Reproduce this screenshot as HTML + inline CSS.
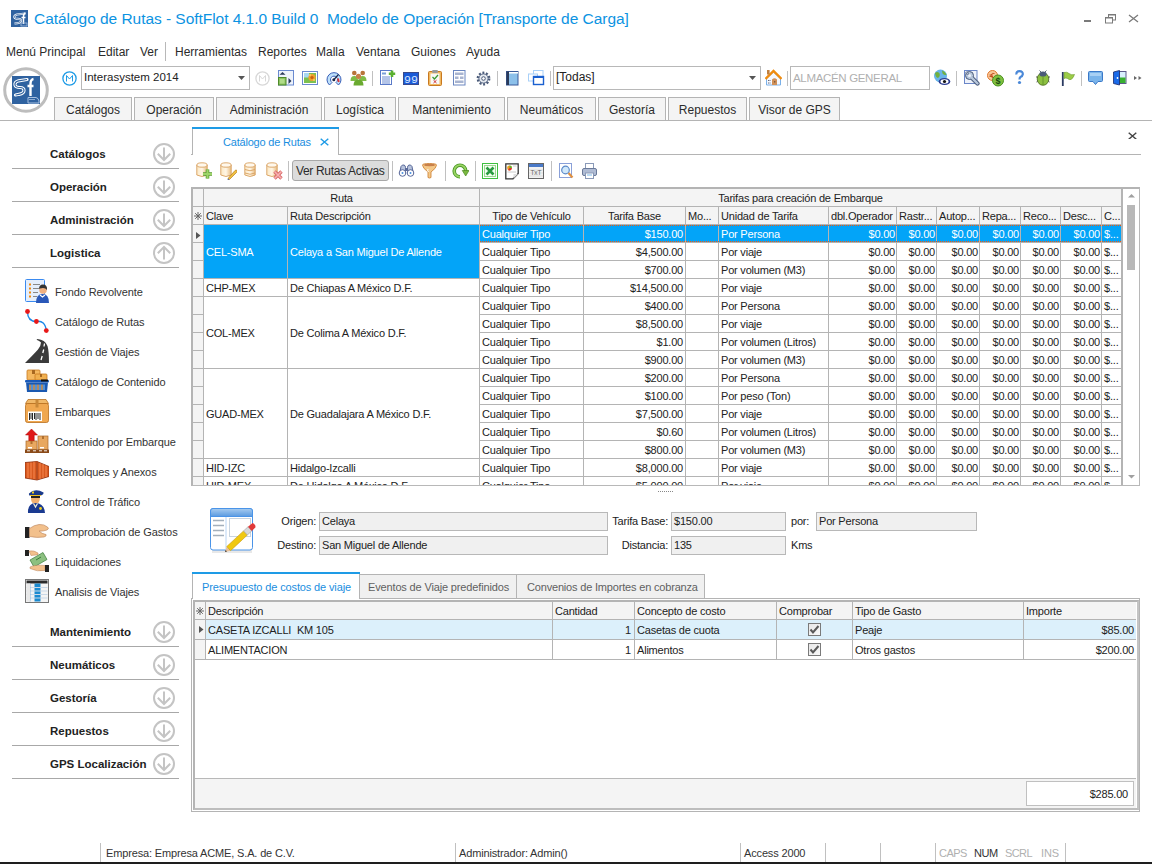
<!DOCTYPE html><html><head><meta charset="utf-8"><style>
html,body{margin:0;padding:0;background:#fff;width:1152px;height:864px;overflow:hidden;position:relative;font-family:"Liberation Sans",sans-serif;}
.t{position:absolute;white-space:pre;}
.r{position:absolute;box-sizing:border-box;}
</style></head><body>
<svg class="r" style="left:11px;top:10px" width="17" height="17" viewBox="0 0 17 17"><rect x="0" y="0" width="17" height="17" fill="#2f62a0"/><path d="M14.5 3.5 L6 4.5 Q3 5.2 3.3 7.2 Q3.7 8.8 7 8.8 Q10 8.8 10 10.8 Q10 12.8 6.5 13.2 L3.5 13.5" stroke="#fff" stroke-width="2" fill="none"/><path d="M14.5 3.5 L6 4.5 Q3 5.2 3.3 7.2 Q3.7 8.8 7 8.8 Q10 8.8 10 10.8 Q10 12.8 6.5 13.2 L3.5 13.5" stroke="#2f62a0" stroke-width="0.7" fill="none"/><path d="M12.5 14 V6.5 Q12.5 3.5 14.5 3 M10.5 7.5 H14.5" stroke="#fff" stroke-width="1.5" fill="none"/><rect x="10" y="13" width="6" height="3" fill="none" stroke="#a8c0e0" stroke-width="0.8"/></svg>
<div class="t" style="left:34px;top:7.63px;font-size:15.5px;line-height:22px;color:#0c93e2;letter-spacing:-0.04px;">Catálogo de Rutas - SoftFlot 4.1.0 Build 0  Modelo de Operación [Transporte de Carga]</div>
<div class="r" style="left:1084px;top:20px;width:7px;height:2px;background:#7a7a7a"></div>
<svg class="r" style="left:1104px;top:13px" width="13" height="11" viewBox="0 0 13 11"><rect x="4.5" y="1.5" width="7" height="5.5" fill="none" stroke="#7a7a7a"/><rect x="4" y="1" width="8" height="1.5" fill="#7a7a7a"/><rect x="1.5" y="4.5" width="7" height="5.5" fill="#fff" stroke="#7a7a7a"/><rect x="1" y="4" width="8" height="1.5" fill="#7a7a7a"/></svg>
<svg class="r" style="left:1128px;top:14px" width="11" height="9" viewBox="0 0 11 9"><path d="M1 1 L10 8 M10 1 L1 8" stroke="#7a7a7a" stroke-width="1.3"/></svg>
<div class="t" style="left:6px;top:44.34px;font-size:12px;line-height:17px;color:#2b2b2b;">Menú Principal</div>
<div class="t" style="left:98px;top:44.34px;font-size:12px;line-height:17px;color:#2b2b2b;">Editar</div>
<div class="t" style="left:140px;top:44.34px;font-size:12px;line-height:17px;color:#2b2b2b;">Ver</div>
<div class="t" style="left:175px;top:44.34px;font-size:12px;line-height:17px;color:#2b2b2b;">Herramientas</div>
<div class="t" style="left:258px;top:44.34px;font-size:12px;line-height:17px;color:#2b2b2b;">Reportes</div>
<div class="t" style="left:316px;top:44.34px;font-size:12px;line-height:17px;color:#2b2b2b;">Malla</div>
<div class="t" style="left:356px;top:44.34px;font-size:12px;line-height:17px;color:#2b2b2b;">Ventana</div>
<div class="t" style="left:411px;top:44.34px;font-size:12px;line-height:17px;color:#2b2b2b;">Guiones</div>
<div class="t" style="left:466px;top:44.34px;font-size:12px;line-height:17px;color:#2b2b2b;">Ayuda</div>
<div class="r" style="left:165px;top:42px;width:1px;height:19px;background:#b8b8b8"></div>
<svg class="r" style="left:2px;top:66px" width="48" height="48" viewBox="0 0 48 48"><circle cx="24" cy="24" r="21.3" fill="#fff" stroke="#bdbdbd" stroke-width="3"/><rect x="10" y="10" width="28" height="28" fill="#2f62a0"/><path d="M25 13.5 L16.5 14.8 Q12.5 15.8 13 19 Q13.5 21.5 18 21.5 Q22 21.5 22 24.5 Q22 27.5 17 28.3 L13.5 29" stroke="#fff" stroke-width="3.2" fill="none" stroke-linecap="round"/><path d="M25 13.5 L16.5 14.8 Q12.5 15.8 13 19 Q13.5 21.5 18 21.5 Q22 21.5 22 24.5 Q22 27.5 17 28.3 L13.5 29" stroke="#2f62a0" stroke-width="1.2" fill="none"/><path d="M28.5 30 V18 Q28.5 13.5 31.5 13 M25.5 20 H31.5" stroke="#fff" stroke-width="2.4" fill="none"/><path d="M26 31.5 H34 Q36.5 32 37 35 V37 H26Z" fill="none" stroke="#a8c0e0" stroke-width="1"/><path d="M27 33.5 H33" stroke="#a8c0e0" stroke-width="0.8"/></svg>
<svg class="r" style="left:62px;top:71px" width="15" height="15" viewBox="0 0 15 15"><circle cx="7.5" cy="7.5" r="6.6" fill="#fff" stroke="#1e9be6" stroke-width="1.3"/><path d="M4.5 10.5 V4.5 L7.5 8 L10.5 4.5 V10.5" stroke="#1e9be6" stroke-width="1" fill="none"/></svg>
<div class="r" style="left:81px;top:66px;width:169px;height:24px;border:1px solid #b8b8b8;background:#fff"></div>
<div class="t" style="left:84px;top:69.02px;font-size:11.5px;line-height:16px;color:#222;">Interasystem 2014</div>
<svg class="r" style="left:238px;top:76px" width="7" height="4" viewBox="0 0 7 4"><path d="M0 0 H7 L3.5 4Z" fill="#555"/></svg>
<svg class="r" style="left:255px;top:71px" width="15" height="15" viewBox="0 0 15 15"><circle cx="7.5" cy="7.5" r="6.6" fill="#fff" stroke="#d8d8d8" stroke-width="1.3"/><path d="M4.5 10.5 V4.5 L7.5 8 L10.5 4.5 V10.5" stroke="#d8d8d8" stroke-width="1" fill="none"/></svg>
<svg class="r" style="left:278px;top:70px" width="16" height="16" viewBox="0 0 16 16"><rect x="0.5" y="0.5" width="15" height="14.5" fill="#eef3fb" stroke="#6a8ad0"/><rect x="0.5" y="7.5" width="7.5" height="7.5" fill="#8cc462" stroke="#4f8a2a"/><rect x="2" y="9" width="4.5" height="4.5" fill="#b0dc88"/><path d="M4.5 2 L7.5 4.8 H1.5Z" fill="#2a3a5a"/><path d="M10.5 8 L13.5 11 L10.5 14Z" fill="#2a3a5a"/></svg>
<svg class="r" style="left:302px;top:71px" width="16" height="14" viewBox="0 0 16 14"><rect x="0.5" y="0.5" width="15" height="13" fill="#fff" stroke="#6a8ad0"/><rect x="2" y="2" width="12" height="10" fill="#7cc050"/><rect x="2" y="2" width="5" height="4.5" fill="#a8d8f0"/><circle cx="10" cy="6.5" r="3.6" fill="#f0a030"/><circle cx="10" cy="6.5" r="1.6" fill="#c86010"/><circle cx="8" cy="4" r="1" fill="#f8d060"/><circle cx="12" cy="9" r="1" fill="#f8d060"/></svg>
<svg class="r" style="left:326px;top:71px" width="16" height="15" viewBox="0 0 16 15"><path d="M3.5 14 A7 7 0 1 1 12.5 14 L10 11.5 A3.5 3.5 0 1 0 6 11.5Z" fill="#bfe0fa" stroke="#3a60b8" stroke-width="1"/><path d="M8 8.5 L12.5 3.5" stroke="#1a2a4a" stroke-width="1.2"/><circle cx="7.8" cy="8.8" r="1.5" fill="#1a2a4a"/><path d="M12 7.5 L12.8 11" stroke="#e03030" stroke-width="1.8"/></svg>
<svg class="r" style="left:350px;top:69px" width="17" height="17" viewBox="0 0 17 17"><circle cx="4.3" cy="4" r="2.3" fill="#b8743a"/><circle cx="12.7" cy="4" r="2.3" fill="#b8743a"/><path d="M0.5 12 Q0.5 7 4.3 7 Q8 7 8 12Z" fill="#80bc48"/><path d="M9 12 Q9 7 12.7 7 Q16.5 7 16.5 12Z" fill="#80bc48"/><circle cx="8.5" cy="7.3" r="2.6" fill="#c88048"/><path d="M3.5 16.5 Q3.5 10.5 8.5 10.5 Q13.5 10.5 13.5 16.5Z" fill="#6aaa30"/></svg>
<div class="r" style="left:372px;top:71px;width:1px;height:15px;background:#c0c0c0"></div>
<svg class="r" style="left:379px;top:70px" width="17" height="16" viewBox="0 0 17 16"><rect x="1.5" y="0.5" width="11" height="14" fill="#fff" stroke="#5a7ac8"/><rect x="3" y="2.5" width="4" height="2" fill="#7aa0d8"/><path d="M3 7 H11 M3 9 H11 M3 11 H11 M3 13 H11" stroke="#6a8ad0" stroke-width="1"/><path d="M13 0.5 V7 M9.8 3.8 H16.2" stroke="#5ab030" stroke-width="2.6"/></svg>
<svg class="r" style="left:403px;top:72px" width="16" height="13" viewBox="0 0 16 13"><rect x="0.5" y="0.5" width="15" height="12" fill="#1a5ad8" stroke="#3a4a8a"/><text x="8" y="11" font-size="11.5" text-anchor="middle" fill="#dbe8ff" font-family="Liberation Mono">99</text></svg>
<svg class="r" style="left:428px;top:70px" width="14" height="16" viewBox="0 0 14 16"><rect x="0.5" y="1.5" width="13" height="14" rx="1" fill="#f0b860" stroke="#c87820"/><rect x="2.5" y="3.5" width="9" height="10.5" fill="#f8f8f8"/><rect x="4" y="0" width="6" height="3" rx="1.2" fill="#9a9a9a"/><path d="M4.5 7 L6.5 9 L10 5" stroke="#3a9a30" stroke-width="1.2" fill="none"/><path d="M5.5 10.2 L8.5 13 M8.5 10.2 L5.5 13" stroke="#d03030" stroke-width="1"/></svg>
<svg class="r" style="left:453px;top:70px" width="13" height="16" viewBox="0 0 13 16"><rect x="0.5" y="0.5" width="11.5" height="14.5" fill="#fff" stroke="#6a86c0"/><rect x="2" y="2.5" width="8.5" height="2.5" fill="#a8b4d0"/><rect x="2" y="6.5" width="3.5" height="2.5" fill="#a8b4d0"/><rect x="7" y="6.5" width="3.5" height="2.5" fill="#a8b4d0"/><rect x="2" y="10.5" width="8.5" height="2.5" fill="#a8b4d0"/></svg>
<svg class="r" style="left:476px;top:71px" width="15" height="15" viewBox="0 0 15 15"><circle cx="7.5" cy="7.5" r="5.6" fill="none" stroke="#4a5a78" stroke-width="2.6" stroke-dasharray="1.9 1.62"/><circle cx="7.5" cy="7.5" r="4.6" fill="#e4e8ee" stroke="#5a6a88" stroke-width="1"/><circle cx="7.5" cy="7.5" r="1.8" fill="#fff" stroke="#4a5a78" stroke-width="1"/></svg>
<div class="r" style="left:497px;top:71px;width:1px;height:15px;background:#c0c0c0"></div>
<svg class="r" style="left:506px;top:71px" width="13" height="15" viewBox="0 0 13 15"><rect x="0.5" y="0.5" width="11.5" height="13.5" fill="#8cc0ea" stroke="#3a5a9a"/><rect x="0.5" y="0.5" width="2.5" height="13.5" fill="#2a3a5a"/><rect x="3" y="1" width="9" height="1.5" fill="#fff"/></svg>
<svg class="r" style="left:528px;top:70px" width="17" height="16" viewBox="0 0 17 16"><rect x="5.5" y="0.5" width="9.5" height="7" fill="#fff" stroke="#a8d0f8"/><rect x="0.5" y="4" width="9" height="7" fill="#fff" stroke="#a8d0f8"/><rect x="5.5" y="6.5" width="10" height="8" fill="#fff" stroke="#1a60d0" stroke-width="1.4"/><rect x="5" y="6" width="11" height="2" fill="#1a60d0"/></svg>
<div class="r" style="left:550px;top:71px;width:1px;height:15px;background:#c0c0c0"></div>
<div class="r" style="left:553px;top:66px;width:208px;height:24px;border:1px solid #b8b8b8;background:#fff"></div>
<div class="t" style="left:556px;top:69.34px;font-size:12px;line-height:17px;color:#222;">[Todas]</div>
<svg class="r" style="left:749px;top:76px" width="7" height="4" viewBox="0 0 7 4"><path d="M0 0 H7 L3.5 4Z" fill="#555"/></svg>
<svg class="r" style="left:765px;top:69px" width="17" height="17" viewBox="0 0 17 17"><path d="M1.5 9.5 V16 H15.5 V9.5 L8.5 3Z" fill="#f4f8ff" stroke="#7ab0e8"/><path d="M0.5 10 L8.5 2 L16.5 10" stroke="#f08c10" stroke-width="2.4" fill="none"/><rect x="2" y="1" width="2.6" height="4.5" fill="#c08040"/><path d="M7 16 V10.5 Q9.5 8 12 10.5 V16Z" fill="#d09058"/><circle cx="9.8" cy="12.8" r="0.6" fill="#222"/><path d="M3.5 11 V12 M5 11 V12 M3.5 13.5 V14.5 M5 13.5 V14.5" stroke="#445" stroke-width="0.8"/></svg>
<div class="r" style="left:787px;top:71px;width:1px;height:15px;background:#c0c0c0"></div>
<div class="r" style="left:790px;top:66px;width:140px;height:24px;border:1px solid #b8b8b8;background:#fff"></div>
<div class="t" style="left:793px;top:69.52px;font-size:11.5px;line-height:16px;color:#b0b0b0;letter-spacing:-0.33px;">ALMACÉN GENERAL</div>
<svg class="r" style="left:933px;top:69px" width="18" height="17" viewBox="0 0 18 17"><circle cx="7.5" cy="7" r="6.5" fill="#6ab4e8"/><path d="M2 4 Q4.5 2 6.5 4.5 Q7.5 7 5 9 Q2.5 8.5 2 4Z" fill="#70b040"/><path d="M9 1.5 Q12.5 2.5 13.5 6 Q11 6.5 9.5 4.5Z" fill="#70b040"/><ellipse cx="11.5" cy="12.5" rx="5.8" ry="3.6" fill="#2a3a90"/><ellipse cx="11.5" cy="12.5" rx="4" ry="2.2" fill="#fff"/><circle cx="11.5" cy="12.5" r="1.6" fill="#111"/></svg>
<div class="r" style="left:956px;top:71px;width:1px;height:15px;background:#c0c0c0"></div>
<svg class="r" style="left:964px;top:70px" width="16" height="16" viewBox="0 0 16 16"><rect x="0.5" y="0.5" width="12.5" height="13" fill="#eef2fa" stroke="#6a86c8"/><path d="M7 7 L13.5 13.5" stroke="#4a5a7a" stroke-width="4.2" stroke-linecap="round"/><circle cx="5.5" cy="5.5" r="4" fill="#b8c8dc" stroke="#4a5a7a" stroke-width="1"/><path d="M7 7 L13.5 13.5" stroke="#b8c8dc" stroke-width="2.4" stroke-linecap="round"/><path d="M5.5 5.5 L1.5 3 L3 1.5Z" fill="#eef2fa" stroke="#4a5a7a" stroke-width="0.8"/><circle cx="5.5" cy="5.5" r="1.5" fill="#eef2fa"/></svg>
<svg class="r" style="left:987px;top:70px" width="17" height="17" viewBox="0 0 17 17"><circle cx="5.5" cy="5.5" r="5" fill="#f8c898" stroke="#e07830"/><path d="M7.5 3.5 Q5 2.5 4 5 Q4 8.5 7.5 7.5 M2.5 5 H6 M2.5 6.5 H6" stroke="#c04818" stroke-width="0.9" fill="none"/><circle cx="11" cy="10.5" r="5.5" fill="#80c040" stroke="#4a9020"/><text x="11" y="14" font-size="9" text-anchor="middle" fill="#1a4a10" font-weight="bold" font-family="Liberation Sans">$</text></svg>
<svg class="r" style="left:1014px;top:70px" width="11" height="15" viewBox="0 0 11 15"><path d="M2.5 4.5 Q2 1.2 5.5 1.2 Q9 1.2 8.8 4.2 Q8.5 6 6.5 7 Q5.5 7.6 5.5 9.5" stroke="#4a88d8" stroke-width="2.2" fill="none"/><circle cx="5.5" cy="12.5" r="1.6" fill="#4a88d8"/></svg>
<svg class="r" style="left:1036px;top:69px" width="14" height="17" viewBox="0 0 14 17"><path d="M3.5 1.5 L5.5 3.5 M10.5 1.5 L8.5 3.5" stroke="#4a5a6a" stroke-width="0.9"/><ellipse cx="7" cy="10" rx="5.8" ry="6.3" fill="#8cc040" stroke="#4a6a20" stroke-width="0.8"/><ellipse cx="7" cy="5" rx="3.6" ry="2.6" fill="#4a5a78"/><path d="M7 7 V16" stroke="#5a8a28" stroke-width="0.8"/><path d="M0 8 H1.5 M12.5 8 H14 M0.5 13 L1.8 12 M13.5 13 L12.2 12" stroke="#333" stroke-width="0.8"/></svg>
<svg class="r" style="left:1061px;top:71px" width="14" height="15" viewBox="0 0 14 15"><path d="M1.8 1 V15" stroke="#2a3a60" stroke-width="1.8"/><path d="M3 1.5 Q6 0.5 8 2.5 Q10.5 4.5 13.5 3.5 Q12.5 7 10 8.5 Q8 9 6.5 7.5 Q5 6.5 3 7.5Z" fill="#9ccc48" stroke="#6a9a28" stroke-width="0.6"/></svg>
<div class="r" style="left:1081px;top:71px;width:1px;height:15px;background:#c0c0c0"></div>
<svg class="r" style="left:1088px;top:71px" width="16" height="15" viewBox="0 0 16 15"><path d="M1.5 0.5 H13.5 Q14.5 0.5 14.5 1.5 V9.5 Q14.5 10.5 13.5 10.5 H10 L7.5 13.5 L5 10.5 H1.5 Q0.5 10.5 0.5 9.5 V1.5 Q0.5 0.5 1.5 0.5Z" fill="#7ab4ea" stroke="#3a78c8"/><rect x="2" y="2" width="11" height="3" fill="#a8d0f4"/></svg>
<svg class="r" style="left:1113px;top:70px" width="14" height="16" viewBox="0 0 14 16"><rect x="6" y="1.5" width="7" height="12" fill="#d8f0fc" stroke="#5a5a8a"/><rect x="6.5" y="7.5" width="6" height="5.5" fill="#38b030"/><path d="M0.5 2 L6.5 0.5 V15 L0.5 13.5Z" fill="#1a6ae8" stroke="#1a2a6a" stroke-width="0.8"/><circle cx="4.5" cy="8" r="0.9" fill="#fff"/></svg>
<svg class="r" style="left:1134px;top:76px" width="8" height="5" viewBox="0 0 8 5"><path d="M0 0 L3 2 L0 4Z M4.5 0 L7.5 2 L4.5 4Z" fill="#666"/></svg>
<div class="r" style="left:54px;top:97px;width:78px;height:24px;background:#f4f4f4;border:1px solid #b4b4b4;border-bottom:none"></div>
<div class="t" style="left:54px;top:102.34px;font-size:12px;line-height:17px;color:#2b2b2b;width:78px;text-align:center;">Catálogos</div>
<div class="r" style="left:134px;top:97px;width:80px;height:24px;background:#f4f4f4;border:1px solid #b4b4b4;border-bottom:none"></div>
<div class="t" style="left:134px;top:102.34px;font-size:12px;line-height:17px;color:#2b2b2b;width:80px;text-align:center;">Operación</div>
<div class="r" style="left:216px;top:97px;width:106px;height:24px;background:#f4f4f4;border:1px solid #b4b4b4;border-bottom:none"></div>
<div class="t" style="left:216px;top:102.34px;font-size:12px;line-height:17px;color:#2b2b2b;width:106px;text-align:center;">Administración</div>
<div class="r" style="left:324px;top:97px;width:72px;height:24px;background:#f4f4f4;border:1px solid #b4b4b4;border-bottom:none"></div>
<div class="t" style="left:324px;top:102.34px;font-size:12px;line-height:17px;color:#2b2b2b;width:72px;text-align:center;">Logística</div>
<div class="r" style="left:398px;top:97px;width:107px;height:24px;background:#f4f4f4;border:1px solid #b4b4b4;border-bottom:none"></div>
<div class="t" style="left:398px;top:102.34px;font-size:12px;line-height:17px;color:#2b2b2b;width:107px;text-align:center;">Mantenimiento</div>
<div class="r" style="left:507px;top:97px;width:89px;height:24px;background:#f4f4f4;border:1px solid #b4b4b4;border-bottom:none"></div>
<div class="t" style="left:507px;top:102.34px;font-size:12px;line-height:17px;color:#2b2b2b;width:89px;text-align:center;">Neumáticos</div>
<div class="r" style="left:598px;top:97px;width:68px;height:24px;background:#f4f4f4;border:1px solid #b4b4b4;border-bottom:none"></div>
<div class="t" style="left:598px;top:102.34px;font-size:12px;line-height:17px;color:#2b2b2b;width:68px;text-align:center;">Gestoría</div>
<div class="r" style="left:668px;top:97px;width:79px;height:24px;background:#f4f4f4;border:1px solid #b4b4b4;border-bottom:none"></div>
<div class="t" style="left:668px;top:102.34px;font-size:12px;line-height:17px;color:#2b2b2b;width:79px;text-align:center;">Repuestos</div>
<div class="r" style="left:749px;top:97px;width:91px;height:24px;background:#f4f4f4;border:1px solid #b4b4b4;border-bottom:none"></div>
<div class="t" style="left:749px;top:102.34px;font-size:12px;line-height:17px;color:#2b2b2b;width:91px;text-align:center;">Visor de GPS</div>
<div class="r" style="left:0px;top:120px;width:1152px;height:1px;background:#b4b4b4"></div>
<div class="t" style="left:50px;top:146.02px;font-size:11.5px;line-height:16px;color:#222;font-weight:bold;">Catálogos</div>
<svg class="r" style="left:153px;top:143px" width="22" height="22" viewBox="0 0 22 22"><circle cx="11" cy="11" r="10" fill="#fff" stroke="#c4c4c4" stroke-width="2"/><path d="M11 4.5 V17 M4.8 10.8 L11 17 L17.2 10.8" stroke="#c4c4c4" stroke-width="2" fill="none"/></svg>
<div class="r" style="left:12px;top:168px;width:167px;height:1px;background:#a8a8a8"></div>
<div class="t" style="left:50px;top:179.02px;font-size:11.5px;line-height:16px;color:#222;font-weight:bold;">Operación</div>
<svg class="r" style="left:153px;top:176px" width="22" height="22" viewBox="0 0 22 22"><circle cx="11" cy="11" r="10" fill="#fff" stroke="#c4c4c4" stroke-width="2"/><path d="M11 4.5 V17 M4.8 10.8 L11 17 L17.2 10.8" stroke="#c4c4c4" stroke-width="2" fill="none"/></svg>
<div class="r" style="left:12px;top:201px;width:167px;height:1px;background:#a8a8a8"></div>
<div class="t" style="left:50px;top:212.02px;font-size:11.5px;line-height:16px;color:#222;font-weight:bold;">Administración</div>
<svg class="r" style="left:153px;top:209px" width="22" height="22" viewBox="0 0 22 22"><circle cx="11" cy="11" r="10" fill="#fff" stroke="#c4c4c4" stroke-width="2"/><path d="M11 4.5 V17 M4.8 10.8 L11 17 L17.2 10.8" stroke="#c4c4c4" stroke-width="2" fill="none"/></svg>
<div class="r" style="left:12px;top:234px;width:167px;height:1px;background:#a8a8a8"></div>
<div class="t" style="left:50px;top:245.02px;font-size:11.5px;line-height:16px;color:#222;font-weight:bold;">Logistica</div>
<svg class="r" style="left:153px;top:242px" width="22" height="22" viewBox="0 0 22 22"><circle cx="11" cy="11" r="10" fill="#fff" stroke="#c4c4c4" stroke-width="2"/><path d="M11 17.5 V5 M4.8 11.2 L11 5 L17.2 11.2" stroke="#c4c4c4" stroke-width="2" fill="none"/></svg>
<div class="r" style="left:12px;top:267px;width:167px;height:1px;background:#a8a8a8"></div>
<div class="t" style="left:50px;top:624.02px;font-size:11.5px;line-height:16px;color:#222;font-weight:bold;">Mantenimiento</div>
<svg class="r" style="left:153px;top:621px" width="22" height="22" viewBox="0 0 22 22"><circle cx="11" cy="11" r="10" fill="#fff" stroke="#c4c4c4" stroke-width="2"/><path d="M11 4.5 V17 M4.8 10.8 L11 17 L17.2 10.8" stroke="#c4c4c4" stroke-width="2" fill="none"/></svg>
<div class="r" style="left:12px;top:646px;width:167px;height:1px;background:#a8a8a8"></div>
<div class="t" style="left:50px;top:657.02px;font-size:11.5px;line-height:16px;color:#222;font-weight:bold;">Neumáticos</div>
<svg class="r" style="left:153px;top:654px" width="22" height="22" viewBox="0 0 22 22"><circle cx="11" cy="11" r="10" fill="#fff" stroke="#c4c4c4" stroke-width="2"/><path d="M11 4.5 V17 M4.8 10.8 L11 17 L17.2 10.8" stroke="#c4c4c4" stroke-width="2" fill="none"/></svg>
<div class="r" style="left:12px;top:679px;width:167px;height:1px;background:#a8a8a8"></div>
<div class="t" style="left:50px;top:690.02px;font-size:11.5px;line-height:16px;color:#222;font-weight:bold;">Gestoría</div>
<svg class="r" style="left:153px;top:687px" width="22" height="22" viewBox="0 0 22 22"><circle cx="11" cy="11" r="10" fill="#fff" stroke="#c4c4c4" stroke-width="2"/><path d="M11 4.5 V17 M4.8 10.8 L11 17 L17.2 10.8" stroke="#c4c4c4" stroke-width="2" fill="none"/></svg>
<div class="r" style="left:12px;top:712px;width:167px;height:1px;background:#a8a8a8"></div>
<div class="t" style="left:50px;top:723.02px;font-size:11.5px;line-height:16px;color:#222;font-weight:bold;">Repuestos</div>
<svg class="r" style="left:153px;top:720px" width="22" height="22" viewBox="0 0 22 22"><circle cx="11" cy="11" r="10" fill="#fff" stroke="#c4c4c4" stroke-width="2"/><path d="M11 4.5 V17 M4.8 10.8 L11 17 L17.2 10.8" stroke="#c4c4c4" stroke-width="2" fill="none"/></svg>
<div class="r" style="left:12px;top:745px;width:167px;height:1px;background:#a8a8a8"></div>
<div class="t" style="left:50px;top:756.02px;font-size:11.5px;line-height:16px;color:#222;font-weight:bold;">GPS Localización</div>
<svg class="r" style="left:153px;top:753px" width="22" height="22" viewBox="0 0 22 22"><circle cx="11" cy="11" r="10" fill="#fff" stroke="#c4c4c4" stroke-width="2"/><path d="M11 4.5 V17 M4.8 10.8 L11 17 L17.2 10.8" stroke="#c4c4c4" stroke-width="2" fill="none"/></svg>
<div class="r" style="left:12px;top:778px;width:167px;height:1px;background:#a8a8a8"></div>
<svg class="r" style="left:25px;top:279px" width="24" height="24" viewBox="0 0 24 24"><rect x="0.5" y="0.5" width="19" height="22" rx="1" fill="#e4eefc" stroke="#3a8af0"/><rect x="4" y="4.5" width="2" height="2" fill="#f08a10"/><rect x="4" y="8.5" width="2" height="2" fill="#f08a10"/><rect x="4" y="12.5" width="2" height="2" fill="#f08a10"/><rect x="4" y="16.5" width="2" height="2" fill="#f08a10"/><path d="M8 5.5 H15 M8 9.5 H14 M8 13.5 H13 M8 17.5 H12" stroke="#888" stroke-width="1"/><path d="M11 24 Q11 15 17.5 15 Q24 15 24 24Z" fill="#2a58b8"/><path d="M15 16 L17.5 18 L20 16" stroke="#fff" stroke-width="1.2" fill="none"/><circle cx="18" cy="11" r="3.8" fill="#f0b080"/><path d="M14 10 Q14 5.5 18 5.5 Q22.5 5.5 22 11 Q20 8 15 9.5Z" fill="#333"/></svg>
<div class="t" style="left:55px;top:284.69px;font-size:11px;line-height:15px;color:#333;letter-spacing:-0.1px;">Fondo Revolvente</div>
<svg class="r" style="left:25px;top:309px" width="24" height="24" viewBox="0 0 24 24"><path d="M2.5 2.5 Q2.5 12.5 11.4 12.5 Q20 11 21.3 21.6" stroke="#1a88e8" stroke-width="1.4" fill="none"/><circle cx="2.5" cy="2.5" r="2.4" fill="#e81818"/><circle cx="11.4" cy="12.5" r="2.4" fill="#e81818"/><circle cx="21.3" cy="21.6" r="2.4" fill="#e81818"/></svg>
<div class="t" style="left:55px;top:314.69px;font-size:11px;line-height:15px;color:#333;letter-spacing:-0.1px;">Catálogo de Rutas</div>
<svg class="r" style="left:25px;top:339px" width="24" height="24" viewBox="0 0 24 24"><path d="M0 24 Q8 16 13 10.5 Q16 6.5 16 3.5 Q14.5 2 11.5 0.8 L12.5 0 Q20 0.5 22.5 7 Q24 12 24 24Z" fill="#3a3a3a"/><path d="M19.5 4.5 L19 7.5 M18.7 10.5 L17.8 14 M17.2 17 L16 21" stroke="#fff" stroke-width="1.3"/></svg>
<div class="t" style="left:55px;top:344.69px;font-size:11px;line-height:15px;color:#333;letter-spacing:-0.1px;">Gestión de Viajes</div>
<svg class="r" style="left:25px;top:369px" width="24" height="24" viewBox="0 0 24 24"><rect x="2" y="1" width="13" height="10" rx="1" fill="#f4b860" stroke="#c87820" stroke-width="0.8"/><rect x="7" y="1" width="3" height="4" fill="#a86820"/><rect x="10" y="5" width="12" height="6" rx="1" fill="#f0b050" stroke="#c87820" stroke-width="0.8"/><rect x="15" y="5" width="2" height="3" fill="#a86820"/><rect x="0" y="11" width="24" height="2.6" rx="1" fill="#1a5ab8"/><rect x="16" y="10.5" width="7" height="2" fill="#111"/><path d="M1 13.5 H23 L22 23 H2Z" fill="#1a58b0"/><path d="M5 15.5 V21 M9 15.5 V21 M13 15.5 V21 M17 15.5 V21" stroke="#f0a040" stroke-width="1.4"/><path d="M7 15.5 V21 M11 15.5 V21 M15 15.5 V21 M19 15.5 V21" stroke="#8cc8f8" stroke-width="1"/></svg>
<div class="t" style="left:55px;top:374.69px;font-size:11px;line-height:15px;color:#333;letter-spacing:-0.1px;">Catálogo de Contenido</div>
<svg class="r" style="left:25px;top:399px" width="24" height="24" viewBox="0 0 24 24"><path d="M3 0.5 H21 L23.5 4.5 H0.5Z" fill="#f0b868" stroke="#b87020" stroke-width="0.8"/><rect x="0.5" y="4.5" width="23" height="19" rx="2" fill="#f0a850" stroke="#b87020" stroke-width="0.8"/><rect x="10.5" y="0.5" width="3" height="8" fill="#c88838"/><rect x="3" y="12.5" width="14" height="9.5" fill="#fff"/><path d="M4.5 14 V21 M6 14 V20 M7.5 14 V21 M9.5 14 V20 M11 14 V21 M13 14 V20 M15 14 V21" stroke="#111" stroke-width="0.9"/></svg>
<div class="t" style="left:55px;top:404.69px;font-size:11px;line-height:15px;color:#333;letter-spacing:-0.1px;">Embarques</div>
<svg class="r" style="left:25px;top:429px" width="24" height="24" viewBox="0 0 24 24"><path d="M6.5 0 L12.5 6 H9.2 V12 H3.8 V6 H0.5Z" fill="#e01818" stroke="#a00" stroke-width="0.5"/><rect x="1" y="12" width="11" height="8.5" fill="#e8a860" stroke="#a86828" stroke-width="0.7"/><rect x="13" y="7" width="10" height="13.5" fill="#e8a860" stroke="#a86828" stroke-width="0.7"/><rect x="5.5" y="12" width="2" height="3" fill="#b07030"/><rect x="17" y="7" width="2" height="3" fill="#b07030"/><rect x="3" y="18" width="4" height="1.5" fill="#fff"/><rect x="15" y="18" width="4" height="1.5" fill="#fff"/><rect x="0" y="20.5" width="24" height="3.5" fill="#8a4a18"/><path d="M2 21.8 H5 M8 21.8 H11 M14 21.8 H17 M19 21.8 H22" stroke="#fff" stroke-width="0.9"/></svg>
<div class="t" style="left:55px;top:434.69px;font-size:11px;line-height:15px;color:#333;letter-spacing:-0.1px;">Contenido por Embarque</div>
<svg class="r" style="left:25px;top:459px" width="24" height="24" viewBox="0 0 24 24"><path d="M0 3.5 L12 2.5 L24 7.5 V17.5 L12 21 L0 19Z" fill="#d85a20" stroke="#8a2a08" stroke-width="0.8"/><path d="M3 4 V19 M6 3.5 V19.5 M9 3 V20 M12 2.5 V21 M15 4 V20 M18 5 V19 M21 6.5 V18" stroke="#f88850" stroke-width="1"/><path d="M12 2.5 V21" stroke="#8a2a08" stroke-width="1"/></svg>
<div class="t" style="left:55px;top:464.69px;font-size:11px;line-height:15px;color:#333;letter-spacing:-0.1px;">Remolques y Anexos</div>
<svg class="r" style="left:25px;top:489px" width="24" height="24" viewBox="0 0 24 24"><path d="M4 4.5 Q10 -1.5 18.5 3.5 Q19 6 14 7 H6 Q3.5 6.5 4 4.5Z" fill="#1a3a8a"/><rect x="7" y="2.5" width="2" height="2" fill="#f0d020"/><path d="M5 6.5 H16" stroke="#f0c020" stroke-width="1"/><path d="M6 7 Q5.5 15 10.5 15.5 Q15 15 15 7Z" fill="#f0b070"/><path d="M6 7 H15 V9 H6Z" fill="#222"/><path d="M3 24 Q2.5 14.5 10.5 14 Q19.5 14.5 20 24Z" fill="#1a3a90"/><path d="M8.5 14.5 L10.5 18 L12.5 14.5" stroke="#f4f4d8" stroke-width="1.2" fill="none"/><circle cx="15.5" cy="19.5" r="1.4" fill="#f0d020"/></svg>
<div class="t" style="left:55px;top:494.69px;font-size:11px;line-height:15px;color:#333;letter-spacing:-0.1px;">Control de Tráfico</div>
<svg class="r" style="left:25px;top:519px" width="24" height="24" viewBox="0 0 24 24"><rect x="0" y="8" width="4.5" height="11" fill="#222"/><path d="M4.5 9.5 Q9 6 14 5.5 Q19 5 22.5 8 Q24.5 10 22 11 Q18 12.5 14 12 Q17 15 21 15.5 Q22 17 19 18 Q12 19 4.5 17.5Z" fill="#f2c08c" stroke="#b88058" stroke-width="0.6"/></svg>
<div class="t" style="left:55px;top:524.69px;font-size:11px;line-height:15px;color:#333;letter-spacing:-0.1px;">Comprobación de Gastos</div>
<svg class="r" style="left:25px;top:549px" width="24" height="24" viewBox="0 0 24 24"><rect x="0" y="1" width="4" height="6" fill="#222"/><path d="M4 2 Q9 1 13 4 Q14 6 11 6 L6 6.5Z" fill="#f2c08c" stroke="#b88058" stroke-width="0.5"/><path d="M5 11 L18 3.5 L22 10.5 L9 18Z" fill="#8cc080" stroke="#3a7a3a" stroke-width="0.7"/><path d="M11 11 L16 8" stroke="#3a7a3a" stroke-width="1"/><path d="M5 18 Q10 15.5 20 16.5 V21.5 Q12 23 5 19.5Z" fill="#f2c08c" stroke="#b88058" stroke-width="0.5"/><rect x="20" y="16" width="4" height="7" fill="#222"/></svg>
<div class="t" style="left:55px;top:554.69px;font-size:11px;line-height:15px;color:#333;letter-spacing:-0.1px;">Liquidaciones</div>
<svg class="r" style="left:25px;top:579px" width="24" height="24" viewBox="0 0 24 24"><rect x="0.5" y="0.5" width="23" height="23" fill="#f4f4f4" stroke="#777"/><rect x="1.5" y="1.5" width="21" height="3" fill="#2a2a2a"/><rect x="9.5" y="4.5" width="6" height="18" fill="#1a8ad0"/><path d="M1.5 8.5 H22.5 M1.5 12 H22.5 M1.5 15.5 H22.5 M1.5 19 H22.5" stroke="#c8d8e8" stroke-width="1"/><path d="M5 4.5 V22.5" stroke="#8ab8e0"/><rect x="1.5" y="4.5" width="3.5" height="18" fill="#e8e8e8"/></svg>
<div class="t" style="left:55px;top:584.69px;font-size:11px;line-height:15px;color:#333;letter-spacing:-0.1px;">Analisis de Viajes</div>
<div class="r" style="left:100px;top:843px;width:1px;height:19px;background:#c0c0c0"></div>
<div class="r" style="left:455px;top:843px;width:1px;height:19px;background:#c0c0c0"></div>
<div class="r" style="left:740px;top:843px;width:1px;height:19px;background:#c0c0c0"></div>
<div class="r" style="left:825px;top:843px;width:1px;height:19px;background:#c0c0c0"></div>
<div class="r" style="left:880px;top:843px;width:1px;height:19px;background:#c0c0c0"></div>
<div class="r" style="left:935px;top:843px;width:1px;height:19px;background:#c0c0c0"></div>
<div class="r" style="left:1065px;top:843px;width:1px;height:19px;background:#c0c0c0"></div>
<div class="t" style="left:106px;top:845.69px;font-size:11px;line-height:15px;color:#333;letter-spacing:-0.15px;">Empresa: Empresa ACME, S.A. de C.V.</div>
<div class="t" style="left:459px;top:845.69px;font-size:11px;line-height:15px;color:#333;letter-spacing:-0.15px;">Administrador: Admin()</div>
<div class="t" style="left:744px;top:845.69px;font-size:11px;line-height:15px;color:#333;letter-spacing:-0.15px;">Access 2000</div>
<div class="t" style="left:939px;top:845.69px;font-size:11px;line-height:15px;color:#b0b0b0;letter-spacing:-0.5px;">CAPS</div>
<div class="t" style="left:974px;top:845.69px;font-size:11px;line-height:15px;color:#333;letter-spacing:-0.5px;">NUM</div>
<div class="t" style="left:1005px;top:845.69px;font-size:11px;line-height:15px;color:#b0b0b0;letter-spacing:-0.6px;">SCRL</div>
<div class="t" style="left:1041px;top:845.69px;font-size:11px;line-height:15px;color:#b0b0b0;letter-spacing:-0.15px;">INS</div>
<div class="r" style="left:0px;top:862px;width:1152px;height:2px;background:#1e1e1e"></div>
<div class="r" style="left:191px;top:154px;width:950px;height:1px;background:#b4b4b4"></div>
<div class="r" style="left:192px;top:127px;width:147px;height:28px;background:#fff;border-left:1px solid #b4b4b4;border-right:1px solid #b4b4b4"></div>
<div class="r" style="left:192px;top:127px;width:147px;height:2px;background:#1e9be6"></div>
<div class="t" style="left:223px;top:134.69px;font-size:11px;line-height:15px;color:#1a8ee0;letter-spacing:-0.2px;">Catálogo de Rutas</div>
<svg class="r" style="left:320px;top:138px" width="9" height="8" viewBox="0 0 9 8"><path d="M0.7 0.7 L8.3 7.3 M8.3 0.7 L0.7 7.3" stroke="#1e9be6" stroke-width="1.4"/></svg>
<svg class="r" style="left:1128px;top:132px" width="9" height="7" viewBox="0 0 9 7"><path d="M0.7 0.7 L8.3 7.3 M8.3 0.7 L0.7 7.3" stroke="#444" stroke-width="1.4"/></svg>
<svg class="r" style="left:196px;top:162px" width="17" height="18" viewBox="0 0 17 18"><defs><linearGradient id="cyl" x1="0" x2="1"><stop offset="0" stop-color="#fbe8c4"/><stop offset="0.5" stop-color="#fff6e6"/><stop offset="1" stop-color="#e8bc80"/></linearGradient></defs><path d="M0.8 3 V13 Q6 16 11.2 13 V3" fill="url(#cyl)" stroke="#d8a060" stroke-width="0.9"/><ellipse cx="6" cy="3" rx="5.2" ry="2.2" fill="#fff8ec" stroke="#d8a060" stroke-width="0.9"/><path d="M11.5 7.5 V16.5 M7 12 H16" stroke="#5a9a30" stroke-width="3.6"/><path d="M11.5 7.5 V16.5 M7 12 H16" stroke="#9cd468" stroke-width="2"/></svg>
<svg class="r" style="left:220px;top:162px" width="17" height="18" viewBox="0 0 17 18"><defs><linearGradient id="cyl" x1="0" x2="1"><stop offset="0" stop-color="#fbe8c4"/><stop offset="0.5" stop-color="#fff6e6"/><stop offset="1" stop-color="#e8bc80"/></linearGradient></defs><path d="M0.8 3 V13 Q6 16 11.2 13 V3" fill="url(#cyl)" stroke="#d8a060" stroke-width="0.9"/><ellipse cx="6" cy="3" rx="5.2" ry="2.2" fill="#fff8ec" stroke="#d8a060" stroke-width="0.9"/><path d="M8 16.5 L15 8.5 Q16 7.5 17 8.5 Q17.5 9.5 16.5 10.5 L9.5 17.5Z" fill="#f0c040" stroke="#b88020" stroke-width="0.7"/><path d="M8 16.5 L7.5 18 L9.5 17.5Z" fill="#3a4a8a"/></svg>
<svg class="r" style="left:244px;top:162px" width="17" height="18" viewBox="0 0 17 18"><defs><linearGradient id="cyl" x1="0" x2="1"><stop offset="0" stop-color="#fbe8c4"/><stop offset="0.5" stop-color="#fff6e6"/><stop offset="1" stop-color="#e8bc80"/></linearGradient></defs><path d="M0.8 3 V13 Q6 16 11.2 13 V3" fill="url(#cyl)" stroke="#d8a060" stroke-width="0.9"/><ellipse cx="6" cy="3" rx="5.2" ry="2.2" fill="#fff8ec" stroke="#d8a060" stroke-width="0.9"/><path d="M1 7.5 Q6 10 11 7.5 M1 11 Q6 13.5 11 11" stroke="#d8a060" fill="none" stroke-width="0.9"/></svg>
<svg class="r" style="left:266px;top:162px" width="17" height="18" viewBox="0 0 17 18"><defs><linearGradient id="cyl" x1="0" x2="1"><stop offset="0" stop-color="#fbe8c4"/><stop offset="0.5" stop-color="#fff6e6"/><stop offset="1" stop-color="#e8bc80"/></linearGradient></defs><path d="M0.8 3 V13 Q6 16 11.2 13 V3" fill="url(#cyl)" stroke="#d8a060" stroke-width="0.9"/><ellipse cx="6" cy="3" rx="5.2" ry="2.2" fill="#fff8ec" stroke="#d8a060" stroke-width="0.9"/><path d="M8.5 9.5 L15.5 16.5 M15.5 9.5 L8.5 16.5" stroke="#d86868" stroke-width="3.4"/><path d="M8.5 9.5 L15.5 16.5 M15.5 9.5 L8.5 16.5" stroke="#f8b0b0" stroke-width="1.6"/></svg>
<div class="r" style="left:288px;top:161px;width:1px;height:20px;background:#c0c0c0"></div>
<div class="r" style="left:292px;top:160px;width:97px;height:21px;background:#dcdcdc;border:1px solid #a8a8a8;border-radius:3px"></div>
<div class="t" style="left:296px;top:163.34px;font-size:12px;line-height:17px;color:#2b2b2b;letter-spacing:-0.33px;">Ver Rutas Activas</div>
<div class="r" style="left:392px;top:161px;width:1px;height:20px;background:#c0c0c0"></div>
<svg class="r" style="left:398px;top:164px" width="17" height="13" viewBox="0 0 17 13"><path d="M1.5 10 L3 2.5 Q4 0.5 6 1 Q7.5 1.5 7.5 3.5 V10Z" fill="#b8c4dc" stroke="#4a5a90" stroke-width="0.9"/><path d="M15.5 10 L14 2.5 Q13 0.5 11 1 Q9.5 1.5 9.5 3.5 V10Z" fill="#b8c4dc" stroke="#4a5a90" stroke-width="0.9"/><rect x="7" y="4" width="3" height="3" fill="#5a6a9a"/><circle cx="4.5" cy="9" r="3.3" fill="#fff" stroke="#4a5a90" stroke-width="0.9"/><circle cx="12.5" cy="9" r="3.3" fill="#fff" stroke="#4a5a90" stroke-width="0.9"/><circle cx="4.5" cy="9" r="1" fill="#4a90e0"/><circle cx="12.5" cy="9" r="1" fill="#4a90e0"/></svg>
<svg class="r" style="left:422px;top:163px" width="15" height="16" viewBox="0 0 15 16"><path d="M0.5 2 Q0.5 0.5 7.5 0.5 Q14.5 0.5 14.5 2 Q14.5 5 9 9 V14.5 Q7.5 15.5 6 14.5 V9 Q0.5 5 0.5 2Z" fill="#f4c888" stroke="#d08840" stroke-width="0.9"/><ellipse cx="7.5" cy="2" rx="5.5" ry="1.2" fill="#c8804a"/><path d="M6 6 Q5 8 6.5 9" stroke="#fff" stroke-width="1" fill="none"/></svg>
<div class="r" style="left:445px;top:161px;width:1px;height:20px;background:#c0c0c0"></div>
<svg class="r" style="left:452px;top:163px" width="17" height="16" viewBox="0 0 17 16"><path d="M8 13.8 A5.8 5.8 0 1 1 13.8 8" stroke="#4a9a28" stroke-width="3.6" fill="none"/><path d="M8 13.8 A5.8 5.8 0 1 1 13.8 8" stroke="#9cd464" stroke-width="1.8" fill="none"/><path d="M10.3 7.5 H17 L13.7 13Z" fill="#7ab840" stroke="#4a8a20" stroke-width="0.7"/></svg>
<div class="r" style="left:475px;top:161px;width:1px;height:20px;background:#c0c0c0"></div>
<svg class="r" style="left:482px;top:163px" width="16" height="16" viewBox="0 0 16 16"><rect x="0.5" y="0.5" width="15" height="15" fill="#fff" stroke="#40c040"/><rect x="2.5" y="2.5" width="11" height="11" fill="#f4fff0" stroke="#9ad890"/><path d="M4.5 4.5 L11.5 11.5 M11.5 4.5 L4.5 11.5" stroke="#2a9a40" stroke-width="2.6"/></svg>
<svg class="r" style="left:505px;top:163px" width="15" height="17" viewBox="0 0 15 17"><path d="M0.8 0.8 H13.2 V10.5 L8 15.8 H0.8Z" fill="#fff" stroke="#333" stroke-width="1.3"/><path d="M13 11 L8.5 15.5 V11Z" fill="#ddd"/><circle cx="4.5" cy="5" r="2.4" fill="#f0a020"/><path d="M4.5 5 V2.6 A2.4 2.4 0 0 1 6.9 5Z" fill="#60b030"/><path d="M4.5 5 H6.9 A2.4 2.4 0 0 1 3 6.9Z" fill="#e03030"/><path d="M8 3 H11.5 M2.5 9 H11" stroke="#ccc"/></svg>
<svg class="r" style="left:528px;top:163px" width="16" height="16" viewBox="0 0 16 16"><rect x="0.5" y="0.5" width="15" height="15" fill="#f2f2f2" stroke="#666"/><rect x="1" y="1" width="14" height="3" fill="#4a7ac8"/><path d="M1 7 H15 M1 10 H15 M1 13 H15" stroke="#ddd"/><text x="8" y="12" font-size="6.5" text-anchor="middle" fill="#666" font-family="Liberation Sans">TxT</text></svg>
<div class="r" style="left:551px;top:161px;width:1px;height:20px;background:#c0c0c0"></div>
<svg class="r" style="left:559px;top:163px" width="15" height="17" viewBox="0 0 15 17"><rect x="0.5" y="0.5" width="12" height="14" fill="#fff" stroke="#8aa0d8"/><circle cx="6.5" cy="7" r="3.8" fill="#d0e8fa" stroke="#5a88c8" stroke-width="1.2"/><path d="M9.5 10 L13.5 14.5" stroke="#e09040" stroke-width="2.2"/></svg>
<svg class="r" style="left:582px;top:163px" width="15" height="16" viewBox="0 0 15 16"><rect x="3.5" y="0.5" width="8" height="6" fill="#fff" stroke="#8a9ab8"/><rect x="0.5" y="5.5" width="14" height="7" rx="1.5" fill="#b0bcd4" stroke="#6a7a9a"/><rect x="3.5" y="10" width="8" height="5.5" fill="#fff" stroke="#8a9ab8"/><rect x="5" y="11.5" width="5" height="1" fill="#7ab8e8"/></svg>
<div class="r" style="left:191px;top:187px;width:949px;height:299px;border:1px solid #b8b8b8;border-left:2px solid #b4b4b4;border-top:2px solid #b4b4b4;background:#fff"></div>
<div class="r" style="left:1121px;top:189px;width:2px;height:296px;background:#b4b4b4"></div>
<div class="r" style="left:193px;top:189px;width:928px;height:36px;background:#f4f4f4"></div>
<div class="r" style="left:193px;top:206px;width:928px;height:1px;background:#b4b4b4"></div>
<div class="r" style="left:193px;top:224px;width:928px;height:1px;background:#b4b4b4"></div>
<div class="r" style="left:203px;top:189px;width:1px;height:296px;background:#b4b4b4"></div>
<div class="r" style="left:479px;top:189px;width:1px;height:18px;background:#b4b4b4"></div>
<div class="t" style="left:204px;top:190.69px;font-size:11px;line-height:15px;color:#222;letter-spacing:-0.2px;width:275px;text-align:center;">Ruta</div>
<div class="t" style="left:480px;top:190.69px;font-size:11px;line-height:15px;color:#222;letter-spacing:-0.2px;width:641px;text-align:center;">Tarifas para creación de Embarque</div>
<div class="t" style="left:206px;top:208.69px;font-size:11px;line-height:15px;color:#222;letter-spacing:-0.2px;">Clave</div>
<div class="r" style="left:287px;top:207px;width:1px;height:18px;background:#b4b4b4"></div>
<div class="t" style="left:290px;top:208.69px;font-size:11px;line-height:15px;color:#222;letter-spacing:-0.2px;">Ruta Descripción</div>
<div class="r" style="left:479px;top:207px;width:1px;height:18px;background:#b4b4b4"></div>
<div class="t" style="left:480px;top:208.69px;font-size:11px;line-height:15px;color:#222;letter-spacing:-0.2px;width:103px;text-align:center;">Tipo de Vehículo</div>
<div class="r" style="left:583px;top:207px;width:1px;height:18px;background:#b4b4b4"></div>
<div class="t" style="left:584px;top:208.69px;font-size:11px;line-height:15px;color:#222;letter-spacing:-0.2px;width:101px;text-align:center;">Tarifa Base</div>
<div class="r" style="left:685px;top:207px;width:1px;height:18px;background:#b4b4b4"></div>
<div class="t" style="left:688px;top:208.69px;font-size:11px;line-height:15px;color:#222;letter-spacing:-0.2px;">Mo...</div>
<div class="r" style="left:718px;top:207px;width:1px;height:18px;background:#b4b4b4"></div>
<div class="t" style="left:721px;top:208.69px;font-size:11px;line-height:15px;color:#222;letter-spacing:-0.2px;">Unidad de Tarifa</div>
<div class="r" style="left:828px;top:207px;width:1px;height:18px;background:#b4b4b4"></div>
<div class="t" style="left:831px;top:208.69px;font-size:11px;line-height:15px;color:#222;letter-spacing:-0.2px;">dbl.Operador</div>
<div class="r" style="left:896px;top:207px;width:1px;height:18px;background:#b4b4b4"></div>
<div class="t" style="left:899px;top:208.69px;font-size:11px;line-height:15px;color:#222;letter-spacing:-0.2px;">Rastr...</div>
<div class="r" style="left:936px;top:207px;width:1px;height:18px;background:#b4b4b4"></div>
<div class="t" style="left:939px;top:208.69px;font-size:11px;line-height:15px;color:#222;letter-spacing:-0.2px;">Autop...</div>
<div class="r" style="left:979px;top:207px;width:1px;height:18px;background:#b4b4b4"></div>
<div class="t" style="left:982px;top:208.69px;font-size:11px;line-height:15px;color:#222;letter-spacing:-0.2px;">Repa...</div>
<div class="r" style="left:1020px;top:207px;width:1px;height:18px;background:#b4b4b4"></div>
<div class="t" style="left:1023px;top:208.69px;font-size:11px;line-height:15px;color:#222;letter-spacing:-0.2px;">Reco...</div>
<div class="r" style="left:1060px;top:207px;width:1px;height:18px;background:#b4b4b4"></div>
<div class="t" style="left:1063px;top:208.69px;font-size:11px;line-height:15px;color:#222;letter-spacing:-0.2px;">Desc...</div>
<div class="r" style="left:1101px;top:207px;width:1px;height:18px;background:#b4b4b4"></div>
<div class="t" style="left:1104px;top:208.69px;font-size:11px;line-height:15px;color:#222;letter-spacing:-0.2px;">C...</div>
<svg class="r" style="left:194px;top:212px" width="8" height="8" viewBox="0 0 8 8"><path d="M4 0 V8 M0 4 H8 M1.2 1.2 L6.8 6.8 M6.8 1.2 L1.2 6.8" stroke="#666" stroke-width="1"/></svg>
<div class="r" style="left:193px;top:225px;width:10px;height:260px;background:#f4f4f4"></div>
<div class="r" style="left:193px;top:225px;width:928px;height:260px;overflow:hidden">
<div class="r" style="left:11px;top:0px;width:275px;height:53px;background:#03a4f8"></div>
<div class="r" style="left:11px;top:53px;width:275px;height:1px;background:#b4b4b4"></div>
<div class="r" style="left:94px;top:0px;width:1px;height:54px;background:#b4b4b4"></div>
<div class="r" style="left:286px;top:0px;width:1px;height:54px;background:#b4b4b4"></div>
<div class="t" style="left:13px;top:19.69px;font-size:11px;line-height:15px;color:#fff;letter-spacing:-0.2px;">CEL-SMA</div>
<div class="t" style="left:97px;top:19.69px;font-size:11px;line-height:15px;color:#fff;letter-spacing:-0.2px;">Celaya a San Miguel De Allende</div>
<div class="r" style="left:287px;top:0px;width:641px;height:17px;background:#03a4f8"></div>
<div class="r" style="left:287px;top:17px;width:641px;height:1px;background:#b4b4b4"></div>
<div class="r" style="left:390px;top:0px;width:1px;height:18px;background:#b4b4b4"></div>
<div class="r" style="left:492px;top:0px;width:1px;height:18px;background:#b4b4b4"></div>
<div class="r" style="left:525px;top:0px;width:1px;height:18px;background:#b4b4b4"></div>
<div class="r" style="left:635px;top:0px;width:1px;height:18px;background:#b4b4b4"></div>
<div class="r" style="left:703px;top:0px;width:1px;height:18px;background:#b4b4b4"></div>
<div class="r" style="left:743px;top:0px;width:1px;height:18px;background:#b4b4b4"></div>
<div class="r" style="left:786px;top:0px;width:1px;height:18px;background:#b4b4b4"></div>
<div class="r" style="left:827px;top:0px;width:1px;height:18px;background:#b4b4b4"></div>
<div class="r" style="left:867px;top:0px;width:1px;height:18px;background:#b4b4b4"></div>
<div class="r" style="left:908px;top:0px;width:1px;height:18px;background:#b4b4b4"></div>
<div class="t" style="left:289px;top:1.69px;font-size:11px;line-height:15px;color:#fff;letter-spacing:-0.2px;">Cualquier Tipo</div>
<div class="t" style="left:391px;top:1.69px;font-size:11px;line-height:15px;color:#fff;letter-spacing:-0.2px;width:99px;text-align:right;">$150.00</div>
<div class="t" style="left:528px;top:1.69px;font-size:11px;line-height:15px;color:#fff;letter-spacing:-0.2px;">Por Persona</div>
<div class="t" style="left:636px;top:1.69px;font-size:11px;line-height:15px;color:#fff;letter-spacing:-0.2px;width:66px;text-align:right;">$0.00</div>
<div class="t" style="left:704px;top:1.69px;font-size:11px;line-height:15px;color:#fff;letter-spacing:-0.2px;width:38px;text-align:right;">$0.00</div>
<div class="t" style="left:744px;top:1.69px;font-size:11px;line-height:15px;color:#fff;letter-spacing:-0.2px;width:41px;text-align:right;">$0.00</div>
<div class="t" style="left:787px;top:1.69px;font-size:11px;line-height:15px;color:#fff;letter-spacing:-0.2px;width:39px;text-align:right;">$0.00</div>
<div class="t" style="left:828px;top:1.69px;font-size:11px;line-height:15px;color:#fff;letter-spacing:-0.2px;width:38px;text-align:right;">$0.00</div>
<div class="t" style="left:868px;top:1.69px;font-size:11px;line-height:15px;color:#fff;letter-spacing:-0.2px;width:39px;text-align:right;">$0.00</div>
<div class="t" style="left:911px;top:1.69px;font-size:11px;line-height:15px;color:#fff;letter-spacing:-0.2px;">$...</div>
<div class="r" style="left:287px;top:0px;width:641px;height:1px;border-top:1px dotted #f25a0a"></div>
<div class="r" style="left:287px;top:16px;width:641px;height:1px;border-top:1px dotted #f25a0a"></div>
<div class="r" style="left:287px;top:35px;width:641px;height:1px;background:#b4b4b4"></div>
<div class="r" style="left:390px;top:18px;width:1px;height:18px;background:#b4b4b4"></div>
<div class="r" style="left:492px;top:18px;width:1px;height:18px;background:#b4b4b4"></div>
<div class="r" style="left:525px;top:18px;width:1px;height:18px;background:#b4b4b4"></div>
<div class="r" style="left:635px;top:18px;width:1px;height:18px;background:#b4b4b4"></div>
<div class="r" style="left:703px;top:18px;width:1px;height:18px;background:#b4b4b4"></div>
<div class="r" style="left:743px;top:18px;width:1px;height:18px;background:#b4b4b4"></div>
<div class="r" style="left:786px;top:18px;width:1px;height:18px;background:#b4b4b4"></div>
<div class="r" style="left:827px;top:18px;width:1px;height:18px;background:#b4b4b4"></div>
<div class="r" style="left:867px;top:18px;width:1px;height:18px;background:#b4b4b4"></div>
<div class="r" style="left:908px;top:18px;width:1px;height:18px;background:#b4b4b4"></div>
<div class="t" style="left:289px;top:19.69px;font-size:11px;line-height:15px;color:#222;letter-spacing:-0.2px;">Cualquier Tipo</div>
<div class="t" style="left:391px;top:19.69px;font-size:11px;line-height:15px;color:#222;letter-spacing:-0.2px;width:99px;text-align:right;">$4,500.00</div>
<div class="t" style="left:528px;top:19.69px;font-size:11px;line-height:15px;color:#222;letter-spacing:-0.2px;">Por viaje</div>
<div class="t" style="left:636px;top:19.69px;font-size:11px;line-height:15px;color:#222;letter-spacing:-0.2px;width:66px;text-align:right;">$0.00</div>
<div class="t" style="left:704px;top:19.69px;font-size:11px;line-height:15px;color:#222;letter-spacing:-0.2px;width:38px;text-align:right;">$0.00</div>
<div class="t" style="left:744px;top:19.69px;font-size:11px;line-height:15px;color:#222;letter-spacing:-0.2px;width:41px;text-align:right;">$0.00</div>
<div class="t" style="left:787px;top:19.69px;font-size:11px;line-height:15px;color:#222;letter-spacing:-0.2px;width:39px;text-align:right;">$0.00</div>
<div class="t" style="left:828px;top:19.69px;font-size:11px;line-height:15px;color:#222;letter-spacing:-0.2px;width:38px;text-align:right;">$0.00</div>
<div class="t" style="left:868px;top:19.69px;font-size:11px;line-height:15px;color:#222;letter-spacing:-0.2px;width:39px;text-align:right;">$0.00</div>
<div class="t" style="left:911px;top:19.69px;font-size:11px;line-height:15px;color:#222;letter-spacing:-0.2px;">$...</div>
<div class="r" style="left:287px;top:53px;width:641px;height:1px;background:#b4b4b4"></div>
<div class="r" style="left:390px;top:36px;width:1px;height:18px;background:#b4b4b4"></div>
<div class="r" style="left:492px;top:36px;width:1px;height:18px;background:#b4b4b4"></div>
<div class="r" style="left:525px;top:36px;width:1px;height:18px;background:#b4b4b4"></div>
<div class="r" style="left:635px;top:36px;width:1px;height:18px;background:#b4b4b4"></div>
<div class="r" style="left:703px;top:36px;width:1px;height:18px;background:#b4b4b4"></div>
<div class="r" style="left:743px;top:36px;width:1px;height:18px;background:#b4b4b4"></div>
<div class="r" style="left:786px;top:36px;width:1px;height:18px;background:#b4b4b4"></div>
<div class="r" style="left:827px;top:36px;width:1px;height:18px;background:#b4b4b4"></div>
<div class="r" style="left:867px;top:36px;width:1px;height:18px;background:#b4b4b4"></div>
<div class="r" style="left:908px;top:36px;width:1px;height:18px;background:#b4b4b4"></div>
<div class="t" style="left:289px;top:37.69px;font-size:11px;line-height:15px;color:#222;letter-spacing:-0.2px;">Cualquier Tipo</div>
<div class="t" style="left:391px;top:37.69px;font-size:11px;line-height:15px;color:#222;letter-spacing:-0.2px;width:99px;text-align:right;">$700.00</div>
<div class="t" style="left:528px;top:37.69px;font-size:11px;line-height:15px;color:#222;letter-spacing:-0.2px;">Por volumen (M3)</div>
<div class="t" style="left:636px;top:37.69px;font-size:11px;line-height:15px;color:#222;letter-spacing:-0.2px;width:66px;text-align:right;">$0.00</div>
<div class="t" style="left:704px;top:37.69px;font-size:11px;line-height:15px;color:#222;letter-spacing:-0.2px;width:38px;text-align:right;">$0.00</div>
<div class="t" style="left:744px;top:37.69px;font-size:11px;line-height:15px;color:#222;letter-spacing:-0.2px;width:41px;text-align:right;">$0.00</div>
<div class="t" style="left:787px;top:37.69px;font-size:11px;line-height:15px;color:#222;letter-spacing:-0.2px;width:39px;text-align:right;">$0.00</div>
<div class="t" style="left:828px;top:37.69px;font-size:11px;line-height:15px;color:#222;letter-spacing:-0.2px;width:38px;text-align:right;">$0.00</div>
<div class="t" style="left:868px;top:37.69px;font-size:11px;line-height:15px;color:#222;letter-spacing:-0.2px;width:39px;text-align:right;">$0.00</div>
<div class="t" style="left:911px;top:37.69px;font-size:11px;line-height:15px;color:#222;letter-spacing:-0.2px;">$...</div>
<div class="r" style="left:11px;top:71px;width:275px;height:1px;background:#b4b4b4"></div>
<div class="r" style="left:94px;top:54px;width:1px;height:18px;background:#b4b4b4"></div>
<div class="r" style="left:286px;top:54px;width:1px;height:18px;background:#b4b4b4"></div>
<div class="t" style="left:13px;top:55.69px;font-size:11px;line-height:15px;color:#222;letter-spacing:-0.2px;">CHP-MEX</div>
<div class="t" style="left:97px;top:55.69px;font-size:11px;line-height:15px;color:#222;letter-spacing:-0.2px;">De Chiapas A México D.F.</div>
<div class="r" style="left:287px;top:71px;width:641px;height:1px;background:#b4b4b4"></div>
<div class="r" style="left:390px;top:54px;width:1px;height:18px;background:#b4b4b4"></div>
<div class="r" style="left:492px;top:54px;width:1px;height:18px;background:#b4b4b4"></div>
<div class="r" style="left:525px;top:54px;width:1px;height:18px;background:#b4b4b4"></div>
<div class="r" style="left:635px;top:54px;width:1px;height:18px;background:#b4b4b4"></div>
<div class="r" style="left:703px;top:54px;width:1px;height:18px;background:#b4b4b4"></div>
<div class="r" style="left:743px;top:54px;width:1px;height:18px;background:#b4b4b4"></div>
<div class="r" style="left:786px;top:54px;width:1px;height:18px;background:#b4b4b4"></div>
<div class="r" style="left:827px;top:54px;width:1px;height:18px;background:#b4b4b4"></div>
<div class="r" style="left:867px;top:54px;width:1px;height:18px;background:#b4b4b4"></div>
<div class="r" style="left:908px;top:54px;width:1px;height:18px;background:#b4b4b4"></div>
<div class="t" style="left:289px;top:55.69px;font-size:11px;line-height:15px;color:#222;letter-spacing:-0.2px;">Cualquier Tipo</div>
<div class="t" style="left:391px;top:55.69px;font-size:11px;line-height:15px;color:#222;letter-spacing:-0.2px;width:99px;text-align:right;">$14,500.00</div>
<div class="t" style="left:528px;top:55.69px;font-size:11px;line-height:15px;color:#222;letter-spacing:-0.2px;">Por viaje</div>
<div class="t" style="left:636px;top:55.69px;font-size:11px;line-height:15px;color:#222;letter-spacing:-0.2px;width:66px;text-align:right;">$0.00</div>
<div class="t" style="left:704px;top:55.69px;font-size:11px;line-height:15px;color:#222;letter-spacing:-0.2px;width:38px;text-align:right;">$0.00</div>
<div class="t" style="left:744px;top:55.69px;font-size:11px;line-height:15px;color:#222;letter-spacing:-0.2px;width:41px;text-align:right;">$0.00</div>
<div class="t" style="left:787px;top:55.69px;font-size:11px;line-height:15px;color:#222;letter-spacing:-0.2px;width:39px;text-align:right;">$0.00</div>
<div class="t" style="left:828px;top:55.69px;font-size:11px;line-height:15px;color:#222;letter-spacing:-0.2px;width:38px;text-align:right;">$0.00</div>
<div class="t" style="left:868px;top:55.69px;font-size:11px;line-height:15px;color:#222;letter-spacing:-0.2px;width:39px;text-align:right;">$0.00</div>
<div class="t" style="left:911px;top:55.69px;font-size:11px;line-height:15px;color:#222;letter-spacing:-0.2px;">$...</div>
<div class="r" style="left:11px;top:143px;width:275px;height:1px;background:#b4b4b4"></div>
<div class="r" style="left:94px;top:72px;width:1px;height:72px;background:#b4b4b4"></div>
<div class="r" style="left:286px;top:72px;width:1px;height:72px;background:#b4b4b4"></div>
<div class="t" style="left:13px;top:100.69px;font-size:11px;line-height:15px;color:#222;letter-spacing:-0.2px;">COL-MEX</div>
<div class="t" style="left:97px;top:100.69px;font-size:11px;line-height:15px;color:#222;letter-spacing:-0.2px;">De Colima A México D.F.</div>
<div class="r" style="left:287px;top:89px;width:641px;height:1px;background:#b4b4b4"></div>
<div class="r" style="left:390px;top:72px;width:1px;height:18px;background:#b4b4b4"></div>
<div class="r" style="left:492px;top:72px;width:1px;height:18px;background:#b4b4b4"></div>
<div class="r" style="left:525px;top:72px;width:1px;height:18px;background:#b4b4b4"></div>
<div class="r" style="left:635px;top:72px;width:1px;height:18px;background:#b4b4b4"></div>
<div class="r" style="left:703px;top:72px;width:1px;height:18px;background:#b4b4b4"></div>
<div class="r" style="left:743px;top:72px;width:1px;height:18px;background:#b4b4b4"></div>
<div class="r" style="left:786px;top:72px;width:1px;height:18px;background:#b4b4b4"></div>
<div class="r" style="left:827px;top:72px;width:1px;height:18px;background:#b4b4b4"></div>
<div class="r" style="left:867px;top:72px;width:1px;height:18px;background:#b4b4b4"></div>
<div class="r" style="left:908px;top:72px;width:1px;height:18px;background:#b4b4b4"></div>
<div class="t" style="left:289px;top:73.69px;font-size:11px;line-height:15px;color:#222;letter-spacing:-0.2px;">Cualquier Tipo</div>
<div class="t" style="left:391px;top:73.69px;font-size:11px;line-height:15px;color:#222;letter-spacing:-0.2px;width:99px;text-align:right;">$400.00</div>
<div class="t" style="left:528px;top:73.69px;font-size:11px;line-height:15px;color:#222;letter-spacing:-0.2px;">Por Persona</div>
<div class="t" style="left:636px;top:73.69px;font-size:11px;line-height:15px;color:#222;letter-spacing:-0.2px;width:66px;text-align:right;">$0.00</div>
<div class="t" style="left:704px;top:73.69px;font-size:11px;line-height:15px;color:#222;letter-spacing:-0.2px;width:38px;text-align:right;">$0.00</div>
<div class="t" style="left:744px;top:73.69px;font-size:11px;line-height:15px;color:#222;letter-spacing:-0.2px;width:41px;text-align:right;">$0.00</div>
<div class="t" style="left:787px;top:73.69px;font-size:11px;line-height:15px;color:#222;letter-spacing:-0.2px;width:39px;text-align:right;">$0.00</div>
<div class="t" style="left:828px;top:73.69px;font-size:11px;line-height:15px;color:#222;letter-spacing:-0.2px;width:38px;text-align:right;">$0.00</div>
<div class="t" style="left:868px;top:73.69px;font-size:11px;line-height:15px;color:#222;letter-spacing:-0.2px;width:39px;text-align:right;">$0.00</div>
<div class="t" style="left:911px;top:73.69px;font-size:11px;line-height:15px;color:#222;letter-spacing:-0.2px;">$...</div>
<div class="r" style="left:287px;top:107px;width:641px;height:1px;background:#b4b4b4"></div>
<div class="r" style="left:390px;top:90px;width:1px;height:18px;background:#b4b4b4"></div>
<div class="r" style="left:492px;top:90px;width:1px;height:18px;background:#b4b4b4"></div>
<div class="r" style="left:525px;top:90px;width:1px;height:18px;background:#b4b4b4"></div>
<div class="r" style="left:635px;top:90px;width:1px;height:18px;background:#b4b4b4"></div>
<div class="r" style="left:703px;top:90px;width:1px;height:18px;background:#b4b4b4"></div>
<div class="r" style="left:743px;top:90px;width:1px;height:18px;background:#b4b4b4"></div>
<div class="r" style="left:786px;top:90px;width:1px;height:18px;background:#b4b4b4"></div>
<div class="r" style="left:827px;top:90px;width:1px;height:18px;background:#b4b4b4"></div>
<div class="r" style="left:867px;top:90px;width:1px;height:18px;background:#b4b4b4"></div>
<div class="r" style="left:908px;top:90px;width:1px;height:18px;background:#b4b4b4"></div>
<div class="t" style="left:289px;top:91.69px;font-size:11px;line-height:15px;color:#222;letter-spacing:-0.2px;">Cualquier Tipo</div>
<div class="t" style="left:391px;top:91.69px;font-size:11px;line-height:15px;color:#222;letter-spacing:-0.2px;width:99px;text-align:right;">$8,500.00</div>
<div class="t" style="left:528px;top:91.69px;font-size:11px;line-height:15px;color:#222;letter-spacing:-0.2px;">Por viaje</div>
<div class="t" style="left:636px;top:91.69px;font-size:11px;line-height:15px;color:#222;letter-spacing:-0.2px;width:66px;text-align:right;">$0.00</div>
<div class="t" style="left:704px;top:91.69px;font-size:11px;line-height:15px;color:#222;letter-spacing:-0.2px;width:38px;text-align:right;">$0.00</div>
<div class="t" style="left:744px;top:91.69px;font-size:11px;line-height:15px;color:#222;letter-spacing:-0.2px;width:41px;text-align:right;">$0.00</div>
<div class="t" style="left:787px;top:91.69px;font-size:11px;line-height:15px;color:#222;letter-spacing:-0.2px;width:39px;text-align:right;">$0.00</div>
<div class="t" style="left:828px;top:91.69px;font-size:11px;line-height:15px;color:#222;letter-spacing:-0.2px;width:38px;text-align:right;">$0.00</div>
<div class="t" style="left:868px;top:91.69px;font-size:11px;line-height:15px;color:#222;letter-spacing:-0.2px;width:39px;text-align:right;">$0.00</div>
<div class="t" style="left:911px;top:91.69px;font-size:11px;line-height:15px;color:#222;letter-spacing:-0.2px;">$...</div>
<div class="r" style="left:287px;top:125px;width:641px;height:1px;background:#b4b4b4"></div>
<div class="r" style="left:390px;top:108px;width:1px;height:18px;background:#b4b4b4"></div>
<div class="r" style="left:492px;top:108px;width:1px;height:18px;background:#b4b4b4"></div>
<div class="r" style="left:525px;top:108px;width:1px;height:18px;background:#b4b4b4"></div>
<div class="r" style="left:635px;top:108px;width:1px;height:18px;background:#b4b4b4"></div>
<div class="r" style="left:703px;top:108px;width:1px;height:18px;background:#b4b4b4"></div>
<div class="r" style="left:743px;top:108px;width:1px;height:18px;background:#b4b4b4"></div>
<div class="r" style="left:786px;top:108px;width:1px;height:18px;background:#b4b4b4"></div>
<div class="r" style="left:827px;top:108px;width:1px;height:18px;background:#b4b4b4"></div>
<div class="r" style="left:867px;top:108px;width:1px;height:18px;background:#b4b4b4"></div>
<div class="r" style="left:908px;top:108px;width:1px;height:18px;background:#b4b4b4"></div>
<div class="t" style="left:289px;top:109.69px;font-size:11px;line-height:15px;color:#222;letter-spacing:-0.2px;">Cualquier Tipo</div>
<div class="t" style="left:391px;top:109.69px;font-size:11px;line-height:15px;color:#222;letter-spacing:-0.2px;width:99px;text-align:right;">$1.00</div>
<div class="t" style="left:528px;top:109.69px;font-size:11px;line-height:15px;color:#222;letter-spacing:-0.2px;">Por volumen (Litros)</div>
<div class="t" style="left:636px;top:109.69px;font-size:11px;line-height:15px;color:#222;letter-spacing:-0.2px;width:66px;text-align:right;">$0.00</div>
<div class="t" style="left:704px;top:109.69px;font-size:11px;line-height:15px;color:#222;letter-spacing:-0.2px;width:38px;text-align:right;">$0.00</div>
<div class="t" style="left:744px;top:109.69px;font-size:11px;line-height:15px;color:#222;letter-spacing:-0.2px;width:41px;text-align:right;">$0.00</div>
<div class="t" style="left:787px;top:109.69px;font-size:11px;line-height:15px;color:#222;letter-spacing:-0.2px;width:39px;text-align:right;">$0.00</div>
<div class="t" style="left:828px;top:109.69px;font-size:11px;line-height:15px;color:#222;letter-spacing:-0.2px;width:38px;text-align:right;">$0.00</div>
<div class="t" style="left:868px;top:109.69px;font-size:11px;line-height:15px;color:#222;letter-spacing:-0.2px;width:39px;text-align:right;">$0.00</div>
<div class="t" style="left:911px;top:109.69px;font-size:11px;line-height:15px;color:#222;letter-spacing:-0.2px;">$...</div>
<div class="r" style="left:287px;top:143px;width:641px;height:1px;background:#b4b4b4"></div>
<div class="r" style="left:390px;top:126px;width:1px;height:18px;background:#b4b4b4"></div>
<div class="r" style="left:492px;top:126px;width:1px;height:18px;background:#b4b4b4"></div>
<div class="r" style="left:525px;top:126px;width:1px;height:18px;background:#b4b4b4"></div>
<div class="r" style="left:635px;top:126px;width:1px;height:18px;background:#b4b4b4"></div>
<div class="r" style="left:703px;top:126px;width:1px;height:18px;background:#b4b4b4"></div>
<div class="r" style="left:743px;top:126px;width:1px;height:18px;background:#b4b4b4"></div>
<div class="r" style="left:786px;top:126px;width:1px;height:18px;background:#b4b4b4"></div>
<div class="r" style="left:827px;top:126px;width:1px;height:18px;background:#b4b4b4"></div>
<div class="r" style="left:867px;top:126px;width:1px;height:18px;background:#b4b4b4"></div>
<div class="r" style="left:908px;top:126px;width:1px;height:18px;background:#b4b4b4"></div>
<div class="t" style="left:289px;top:127.69px;font-size:11px;line-height:15px;color:#222;letter-spacing:-0.2px;">Cualquier Tipo</div>
<div class="t" style="left:391px;top:127.69px;font-size:11px;line-height:15px;color:#222;letter-spacing:-0.2px;width:99px;text-align:right;">$900.00</div>
<div class="t" style="left:528px;top:127.69px;font-size:11px;line-height:15px;color:#222;letter-spacing:-0.2px;">Por volumen (M3)</div>
<div class="t" style="left:636px;top:127.69px;font-size:11px;line-height:15px;color:#222;letter-spacing:-0.2px;width:66px;text-align:right;">$0.00</div>
<div class="t" style="left:704px;top:127.69px;font-size:11px;line-height:15px;color:#222;letter-spacing:-0.2px;width:38px;text-align:right;">$0.00</div>
<div class="t" style="left:744px;top:127.69px;font-size:11px;line-height:15px;color:#222;letter-spacing:-0.2px;width:41px;text-align:right;">$0.00</div>
<div class="t" style="left:787px;top:127.69px;font-size:11px;line-height:15px;color:#222;letter-spacing:-0.2px;width:39px;text-align:right;">$0.00</div>
<div class="t" style="left:828px;top:127.69px;font-size:11px;line-height:15px;color:#222;letter-spacing:-0.2px;width:38px;text-align:right;">$0.00</div>
<div class="t" style="left:868px;top:127.69px;font-size:11px;line-height:15px;color:#222;letter-spacing:-0.2px;width:39px;text-align:right;">$0.00</div>
<div class="t" style="left:911px;top:127.69px;font-size:11px;line-height:15px;color:#222;letter-spacing:-0.2px;">$...</div>
<div class="r" style="left:11px;top:233px;width:275px;height:1px;background:#b4b4b4"></div>
<div class="r" style="left:94px;top:144px;width:1px;height:90px;background:#b4b4b4"></div>
<div class="r" style="left:286px;top:144px;width:1px;height:90px;background:#b4b4b4"></div>
<div class="t" style="left:13px;top:181.69px;font-size:11px;line-height:15px;color:#222;letter-spacing:-0.2px;">GUAD-MEX</div>
<div class="t" style="left:97px;top:181.69px;font-size:11px;line-height:15px;color:#222;letter-spacing:-0.2px;">De Guadalajara A México D.F.</div>
<div class="r" style="left:287px;top:161px;width:641px;height:1px;background:#b4b4b4"></div>
<div class="r" style="left:390px;top:144px;width:1px;height:18px;background:#b4b4b4"></div>
<div class="r" style="left:492px;top:144px;width:1px;height:18px;background:#b4b4b4"></div>
<div class="r" style="left:525px;top:144px;width:1px;height:18px;background:#b4b4b4"></div>
<div class="r" style="left:635px;top:144px;width:1px;height:18px;background:#b4b4b4"></div>
<div class="r" style="left:703px;top:144px;width:1px;height:18px;background:#b4b4b4"></div>
<div class="r" style="left:743px;top:144px;width:1px;height:18px;background:#b4b4b4"></div>
<div class="r" style="left:786px;top:144px;width:1px;height:18px;background:#b4b4b4"></div>
<div class="r" style="left:827px;top:144px;width:1px;height:18px;background:#b4b4b4"></div>
<div class="r" style="left:867px;top:144px;width:1px;height:18px;background:#b4b4b4"></div>
<div class="r" style="left:908px;top:144px;width:1px;height:18px;background:#b4b4b4"></div>
<div class="t" style="left:289px;top:145.69px;font-size:11px;line-height:15px;color:#222;letter-spacing:-0.2px;">Cualquier Tipo</div>
<div class="t" style="left:391px;top:145.69px;font-size:11px;line-height:15px;color:#222;letter-spacing:-0.2px;width:99px;text-align:right;">$200.00</div>
<div class="t" style="left:528px;top:145.69px;font-size:11px;line-height:15px;color:#222;letter-spacing:-0.2px;">Por Persona</div>
<div class="t" style="left:636px;top:145.69px;font-size:11px;line-height:15px;color:#222;letter-spacing:-0.2px;width:66px;text-align:right;">$0.00</div>
<div class="t" style="left:704px;top:145.69px;font-size:11px;line-height:15px;color:#222;letter-spacing:-0.2px;width:38px;text-align:right;">$0.00</div>
<div class="t" style="left:744px;top:145.69px;font-size:11px;line-height:15px;color:#222;letter-spacing:-0.2px;width:41px;text-align:right;">$0.00</div>
<div class="t" style="left:787px;top:145.69px;font-size:11px;line-height:15px;color:#222;letter-spacing:-0.2px;width:39px;text-align:right;">$0.00</div>
<div class="t" style="left:828px;top:145.69px;font-size:11px;line-height:15px;color:#222;letter-spacing:-0.2px;width:38px;text-align:right;">$0.00</div>
<div class="t" style="left:868px;top:145.69px;font-size:11px;line-height:15px;color:#222;letter-spacing:-0.2px;width:39px;text-align:right;">$0.00</div>
<div class="t" style="left:911px;top:145.69px;font-size:11px;line-height:15px;color:#222;letter-spacing:-0.2px;">$...</div>
<div class="r" style="left:287px;top:179px;width:641px;height:1px;background:#b4b4b4"></div>
<div class="r" style="left:390px;top:162px;width:1px;height:18px;background:#b4b4b4"></div>
<div class="r" style="left:492px;top:162px;width:1px;height:18px;background:#b4b4b4"></div>
<div class="r" style="left:525px;top:162px;width:1px;height:18px;background:#b4b4b4"></div>
<div class="r" style="left:635px;top:162px;width:1px;height:18px;background:#b4b4b4"></div>
<div class="r" style="left:703px;top:162px;width:1px;height:18px;background:#b4b4b4"></div>
<div class="r" style="left:743px;top:162px;width:1px;height:18px;background:#b4b4b4"></div>
<div class="r" style="left:786px;top:162px;width:1px;height:18px;background:#b4b4b4"></div>
<div class="r" style="left:827px;top:162px;width:1px;height:18px;background:#b4b4b4"></div>
<div class="r" style="left:867px;top:162px;width:1px;height:18px;background:#b4b4b4"></div>
<div class="r" style="left:908px;top:162px;width:1px;height:18px;background:#b4b4b4"></div>
<div class="t" style="left:289px;top:163.69px;font-size:11px;line-height:15px;color:#222;letter-spacing:-0.2px;">Cualquier Tipo</div>
<div class="t" style="left:391px;top:163.69px;font-size:11px;line-height:15px;color:#222;letter-spacing:-0.2px;width:99px;text-align:right;">$100.00</div>
<div class="t" style="left:528px;top:163.69px;font-size:11px;line-height:15px;color:#222;letter-spacing:-0.2px;">Por peso (Ton)</div>
<div class="t" style="left:636px;top:163.69px;font-size:11px;line-height:15px;color:#222;letter-spacing:-0.2px;width:66px;text-align:right;">$0.00</div>
<div class="t" style="left:704px;top:163.69px;font-size:11px;line-height:15px;color:#222;letter-spacing:-0.2px;width:38px;text-align:right;">$0.00</div>
<div class="t" style="left:744px;top:163.69px;font-size:11px;line-height:15px;color:#222;letter-spacing:-0.2px;width:41px;text-align:right;">$0.00</div>
<div class="t" style="left:787px;top:163.69px;font-size:11px;line-height:15px;color:#222;letter-spacing:-0.2px;width:39px;text-align:right;">$0.00</div>
<div class="t" style="left:828px;top:163.69px;font-size:11px;line-height:15px;color:#222;letter-spacing:-0.2px;width:38px;text-align:right;">$0.00</div>
<div class="t" style="left:868px;top:163.69px;font-size:11px;line-height:15px;color:#222;letter-spacing:-0.2px;width:39px;text-align:right;">$0.00</div>
<div class="t" style="left:911px;top:163.69px;font-size:11px;line-height:15px;color:#222;letter-spacing:-0.2px;">$...</div>
<div class="r" style="left:287px;top:197px;width:641px;height:1px;background:#b4b4b4"></div>
<div class="r" style="left:390px;top:180px;width:1px;height:18px;background:#b4b4b4"></div>
<div class="r" style="left:492px;top:180px;width:1px;height:18px;background:#b4b4b4"></div>
<div class="r" style="left:525px;top:180px;width:1px;height:18px;background:#b4b4b4"></div>
<div class="r" style="left:635px;top:180px;width:1px;height:18px;background:#b4b4b4"></div>
<div class="r" style="left:703px;top:180px;width:1px;height:18px;background:#b4b4b4"></div>
<div class="r" style="left:743px;top:180px;width:1px;height:18px;background:#b4b4b4"></div>
<div class="r" style="left:786px;top:180px;width:1px;height:18px;background:#b4b4b4"></div>
<div class="r" style="left:827px;top:180px;width:1px;height:18px;background:#b4b4b4"></div>
<div class="r" style="left:867px;top:180px;width:1px;height:18px;background:#b4b4b4"></div>
<div class="r" style="left:908px;top:180px;width:1px;height:18px;background:#b4b4b4"></div>
<div class="t" style="left:289px;top:181.69px;font-size:11px;line-height:15px;color:#222;letter-spacing:-0.2px;">Cualquier Tipo</div>
<div class="t" style="left:391px;top:181.69px;font-size:11px;line-height:15px;color:#222;letter-spacing:-0.2px;width:99px;text-align:right;">$7,500.00</div>
<div class="t" style="left:528px;top:181.69px;font-size:11px;line-height:15px;color:#222;letter-spacing:-0.2px;">Por viaje</div>
<div class="t" style="left:636px;top:181.69px;font-size:11px;line-height:15px;color:#222;letter-spacing:-0.2px;width:66px;text-align:right;">$0.00</div>
<div class="t" style="left:704px;top:181.69px;font-size:11px;line-height:15px;color:#222;letter-spacing:-0.2px;width:38px;text-align:right;">$0.00</div>
<div class="t" style="left:744px;top:181.69px;font-size:11px;line-height:15px;color:#222;letter-spacing:-0.2px;width:41px;text-align:right;">$0.00</div>
<div class="t" style="left:787px;top:181.69px;font-size:11px;line-height:15px;color:#222;letter-spacing:-0.2px;width:39px;text-align:right;">$0.00</div>
<div class="t" style="left:828px;top:181.69px;font-size:11px;line-height:15px;color:#222;letter-spacing:-0.2px;width:38px;text-align:right;">$0.00</div>
<div class="t" style="left:868px;top:181.69px;font-size:11px;line-height:15px;color:#222;letter-spacing:-0.2px;width:39px;text-align:right;">$0.00</div>
<div class="t" style="left:911px;top:181.69px;font-size:11px;line-height:15px;color:#222;letter-spacing:-0.2px;">$...</div>
<div class="r" style="left:287px;top:215px;width:641px;height:1px;background:#b4b4b4"></div>
<div class="r" style="left:390px;top:198px;width:1px;height:18px;background:#b4b4b4"></div>
<div class="r" style="left:492px;top:198px;width:1px;height:18px;background:#b4b4b4"></div>
<div class="r" style="left:525px;top:198px;width:1px;height:18px;background:#b4b4b4"></div>
<div class="r" style="left:635px;top:198px;width:1px;height:18px;background:#b4b4b4"></div>
<div class="r" style="left:703px;top:198px;width:1px;height:18px;background:#b4b4b4"></div>
<div class="r" style="left:743px;top:198px;width:1px;height:18px;background:#b4b4b4"></div>
<div class="r" style="left:786px;top:198px;width:1px;height:18px;background:#b4b4b4"></div>
<div class="r" style="left:827px;top:198px;width:1px;height:18px;background:#b4b4b4"></div>
<div class="r" style="left:867px;top:198px;width:1px;height:18px;background:#b4b4b4"></div>
<div class="r" style="left:908px;top:198px;width:1px;height:18px;background:#b4b4b4"></div>
<div class="t" style="left:289px;top:199.69px;font-size:11px;line-height:15px;color:#222;letter-spacing:-0.2px;">Cualquier Tipo</div>
<div class="t" style="left:391px;top:199.69px;font-size:11px;line-height:15px;color:#222;letter-spacing:-0.2px;width:99px;text-align:right;">$0.60</div>
<div class="t" style="left:528px;top:199.69px;font-size:11px;line-height:15px;color:#222;letter-spacing:-0.2px;">Por volumen (Litros)</div>
<div class="t" style="left:636px;top:199.69px;font-size:11px;line-height:15px;color:#222;letter-spacing:-0.2px;width:66px;text-align:right;">$0.00</div>
<div class="t" style="left:704px;top:199.69px;font-size:11px;line-height:15px;color:#222;letter-spacing:-0.2px;width:38px;text-align:right;">$0.00</div>
<div class="t" style="left:744px;top:199.69px;font-size:11px;line-height:15px;color:#222;letter-spacing:-0.2px;width:41px;text-align:right;">$0.00</div>
<div class="t" style="left:787px;top:199.69px;font-size:11px;line-height:15px;color:#222;letter-spacing:-0.2px;width:39px;text-align:right;">$0.00</div>
<div class="t" style="left:828px;top:199.69px;font-size:11px;line-height:15px;color:#222;letter-spacing:-0.2px;width:38px;text-align:right;">$0.00</div>
<div class="t" style="left:868px;top:199.69px;font-size:11px;line-height:15px;color:#222;letter-spacing:-0.2px;width:39px;text-align:right;">$0.00</div>
<div class="t" style="left:911px;top:199.69px;font-size:11px;line-height:15px;color:#222;letter-spacing:-0.2px;">$...</div>
<div class="r" style="left:287px;top:233px;width:641px;height:1px;background:#b4b4b4"></div>
<div class="r" style="left:390px;top:216px;width:1px;height:18px;background:#b4b4b4"></div>
<div class="r" style="left:492px;top:216px;width:1px;height:18px;background:#b4b4b4"></div>
<div class="r" style="left:525px;top:216px;width:1px;height:18px;background:#b4b4b4"></div>
<div class="r" style="left:635px;top:216px;width:1px;height:18px;background:#b4b4b4"></div>
<div class="r" style="left:703px;top:216px;width:1px;height:18px;background:#b4b4b4"></div>
<div class="r" style="left:743px;top:216px;width:1px;height:18px;background:#b4b4b4"></div>
<div class="r" style="left:786px;top:216px;width:1px;height:18px;background:#b4b4b4"></div>
<div class="r" style="left:827px;top:216px;width:1px;height:18px;background:#b4b4b4"></div>
<div class="r" style="left:867px;top:216px;width:1px;height:18px;background:#b4b4b4"></div>
<div class="r" style="left:908px;top:216px;width:1px;height:18px;background:#b4b4b4"></div>
<div class="t" style="left:289px;top:217.69px;font-size:11px;line-height:15px;color:#222;letter-spacing:-0.2px;">Cualquier Tipo</div>
<div class="t" style="left:391px;top:217.69px;font-size:11px;line-height:15px;color:#222;letter-spacing:-0.2px;width:99px;text-align:right;">$800.00</div>
<div class="t" style="left:528px;top:217.69px;font-size:11px;line-height:15px;color:#222;letter-spacing:-0.2px;">Por volumen (M3)</div>
<div class="t" style="left:636px;top:217.69px;font-size:11px;line-height:15px;color:#222;letter-spacing:-0.2px;width:66px;text-align:right;">$0.00</div>
<div class="t" style="left:704px;top:217.69px;font-size:11px;line-height:15px;color:#222;letter-spacing:-0.2px;width:38px;text-align:right;">$0.00</div>
<div class="t" style="left:744px;top:217.69px;font-size:11px;line-height:15px;color:#222;letter-spacing:-0.2px;width:41px;text-align:right;">$0.00</div>
<div class="t" style="left:787px;top:217.69px;font-size:11px;line-height:15px;color:#222;letter-spacing:-0.2px;width:39px;text-align:right;">$0.00</div>
<div class="t" style="left:828px;top:217.69px;font-size:11px;line-height:15px;color:#222;letter-spacing:-0.2px;width:38px;text-align:right;">$0.00</div>
<div class="t" style="left:868px;top:217.69px;font-size:11px;line-height:15px;color:#222;letter-spacing:-0.2px;width:39px;text-align:right;">$0.00</div>
<div class="t" style="left:911px;top:217.69px;font-size:11px;line-height:15px;color:#222;letter-spacing:-0.2px;">$...</div>
<div class="r" style="left:11px;top:251px;width:275px;height:1px;background:#b4b4b4"></div>
<div class="r" style="left:94px;top:234px;width:1px;height:18px;background:#b4b4b4"></div>
<div class="r" style="left:286px;top:234px;width:1px;height:18px;background:#b4b4b4"></div>
<div class="t" style="left:13px;top:235.69px;font-size:11px;line-height:15px;color:#222;letter-spacing:-0.2px;">HID-IZC</div>
<div class="t" style="left:97px;top:235.69px;font-size:11px;line-height:15px;color:#222;letter-spacing:-0.2px;">Hidalgo-Izcalli</div>
<div class="r" style="left:287px;top:251px;width:641px;height:1px;background:#b4b4b4"></div>
<div class="r" style="left:390px;top:234px;width:1px;height:18px;background:#b4b4b4"></div>
<div class="r" style="left:492px;top:234px;width:1px;height:18px;background:#b4b4b4"></div>
<div class="r" style="left:525px;top:234px;width:1px;height:18px;background:#b4b4b4"></div>
<div class="r" style="left:635px;top:234px;width:1px;height:18px;background:#b4b4b4"></div>
<div class="r" style="left:703px;top:234px;width:1px;height:18px;background:#b4b4b4"></div>
<div class="r" style="left:743px;top:234px;width:1px;height:18px;background:#b4b4b4"></div>
<div class="r" style="left:786px;top:234px;width:1px;height:18px;background:#b4b4b4"></div>
<div class="r" style="left:827px;top:234px;width:1px;height:18px;background:#b4b4b4"></div>
<div class="r" style="left:867px;top:234px;width:1px;height:18px;background:#b4b4b4"></div>
<div class="r" style="left:908px;top:234px;width:1px;height:18px;background:#b4b4b4"></div>
<div class="t" style="left:289px;top:235.69px;font-size:11px;line-height:15px;color:#222;letter-spacing:-0.2px;">Cualquier Tipo</div>
<div class="t" style="left:391px;top:235.69px;font-size:11px;line-height:15px;color:#222;letter-spacing:-0.2px;width:99px;text-align:right;">$8,000.00</div>
<div class="t" style="left:528px;top:235.69px;font-size:11px;line-height:15px;color:#222;letter-spacing:-0.2px;">Por viaje</div>
<div class="t" style="left:636px;top:235.69px;font-size:11px;line-height:15px;color:#222;letter-spacing:-0.2px;width:66px;text-align:right;">$0.00</div>
<div class="t" style="left:704px;top:235.69px;font-size:11px;line-height:15px;color:#222;letter-spacing:-0.2px;width:38px;text-align:right;">$0.00</div>
<div class="t" style="left:744px;top:235.69px;font-size:11px;line-height:15px;color:#222;letter-spacing:-0.2px;width:41px;text-align:right;">$0.00</div>
<div class="t" style="left:787px;top:235.69px;font-size:11px;line-height:15px;color:#222;letter-spacing:-0.2px;width:39px;text-align:right;">$0.00</div>
<div class="t" style="left:828px;top:235.69px;font-size:11px;line-height:15px;color:#222;letter-spacing:-0.2px;width:38px;text-align:right;">$0.00</div>
<div class="t" style="left:868px;top:235.69px;font-size:11px;line-height:15px;color:#222;letter-spacing:-0.2px;width:39px;text-align:right;">$0.00</div>
<div class="t" style="left:911px;top:235.69px;font-size:11px;line-height:15px;color:#222;letter-spacing:-0.2px;">$...</div>
<div class="r" style="left:11px;top:269px;width:275px;height:1px;background:#b4b4b4"></div>
<div class="r" style="left:94px;top:252px;width:1px;height:18px;background:#b4b4b4"></div>
<div class="r" style="left:286px;top:252px;width:1px;height:18px;background:#b4b4b4"></div>
<div class="t" style="left:13px;top:253.69px;font-size:11px;line-height:15px;color:#222;letter-spacing:-0.2px;">HID-MEX</div>
<div class="t" style="left:97px;top:253.69px;font-size:11px;line-height:15px;color:#222;letter-spacing:-0.2px;">De Hidalgo A México D.F.</div>
<div class="r" style="left:287px;top:269px;width:641px;height:1px;background:#b4b4b4"></div>
<div class="r" style="left:390px;top:252px;width:1px;height:18px;background:#b4b4b4"></div>
<div class="r" style="left:492px;top:252px;width:1px;height:18px;background:#b4b4b4"></div>
<div class="r" style="left:525px;top:252px;width:1px;height:18px;background:#b4b4b4"></div>
<div class="r" style="left:635px;top:252px;width:1px;height:18px;background:#b4b4b4"></div>
<div class="r" style="left:703px;top:252px;width:1px;height:18px;background:#b4b4b4"></div>
<div class="r" style="left:743px;top:252px;width:1px;height:18px;background:#b4b4b4"></div>
<div class="r" style="left:786px;top:252px;width:1px;height:18px;background:#b4b4b4"></div>
<div class="r" style="left:827px;top:252px;width:1px;height:18px;background:#b4b4b4"></div>
<div class="r" style="left:867px;top:252px;width:1px;height:18px;background:#b4b4b4"></div>
<div class="r" style="left:908px;top:252px;width:1px;height:18px;background:#b4b4b4"></div>
<div class="t" style="left:289px;top:253.69px;font-size:11px;line-height:15px;color:#222;letter-spacing:-0.2px;">Cualquier Tipo</div>
<div class="t" style="left:391px;top:253.69px;font-size:11px;line-height:15px;color:#222;letter-spacing:-0.2px;width:99px;text-align:right;">$5,000.00</div>
<div class="t" style="left:528px;top:253.69px;font-size:11px;line-height:15px;color:#222;letter-spacing:-0.2px;">Por viaje</div>
<div class="t" style="left:636px;top:253.69px;font-size:11px;line-height:15px;color:#222;letter-spacing:-0.2px;width:66px;text-align:right;">$0.00</div>
<div class="t" style="left:704px;top:253.69px;font-size:11px;line-height:15px;color:#222;letter-spacing:-0.2px;width:38px;text-align:right;">$0.00</div>
<div class="t" style="left:744px;top:253.69px;font-size:11px;line-height:15px;color:#222;letter-spacing:-0.2px;width:41px;text-align:right;">$0.00</div>
<div class="t" style="left:787px;top:253.69px;font-size:11px;line-height:15px;color:#222;letter-spacing:-0.2px;width:39px;text-align:right;">$0.00</div>
<div class="t" style="left:828px;top:253.69px;font-size:11px;line-height:15px;color:#222;letter-spacing:-0.2px;width:38px;text-align:right;">$0.00</div>
<div class="t" style="left:868px;top:253.69px;font-size:11px;line-height:15px;color:#222;letter-spacing:-0.2px;width:39px;text-align:right;">$0.00</div>
<div class="t" style="left:911px;top:253.69px;font-size:11px;line-height:15px;color:#222;letter-spacing:-0.2px;">$...</div>
<div class="r" style="left:0px;top:17px;width:10px;height:1px;background:#b4b4b4"></div>
<div class="r" style="left:0px;top:35px;width:10px;height:1px;background:#b4b4b4"></div>
<div class="r" style="left:0px;top:53px;width:10px;height:1px;background:#b4b4b4"></div>
<div class="r" style="left:0px;top:71px;width:10px;height:1px;background:#b4b4b4"></div>
<div class="r" style="left:0px;top:89px;width:10px;height:1px;background:#b4b4b4"></div>
<div class="r" style="left:0px;top:107px;width:10px;height:1px;background:#b4b4b4"></div>
<div class="r" style="left:0px;top:125px;width:10px;height:1px;background:#b4b4b4"></div>
<div class="r" style="left:0px;top:143px;width:10px;height:1px;background:#b4b4b4"></div>
<div class="r" style="left:0px;top:161px;width:10px;height:1px;background:#b4b4b4"></div>
<div class="r" style="left:0px;top:179px;width:10px;height:1px;background:#b4b4b4"></div>
<div class="r" style="left:0px;top:197px;width:10px;height:1px;background:#b4b4b4"></div>
<div class="r" style="left:0px;top:215px;width:10px;height:1px;background:#b4b4b4"></div>
<div class="r" style="left:0px;top:233px;width:10px;height:1px;background:#b4b4b4"></div>
<div class="r" style="left:0px;top:251px;width:10px;height:1px;background:#b4b4b4"></div>
<div class="r" style="left:0px;top:269px;width:10px;height:1px;background:#b4b4b4"></div>
</div>
<svg class="r" style="left:196px;top:232px" width="5" height="7" viewBox="0 0 5 7"><path d="M0 0 L4.5 3.5 L0 7Z" fill="#555"/></svg>
<div class="r" style="left:1127px;top:205px;width:8px;height:65px;background:#b8b8b8"></div>
<svg class="r" style="left:1128px;top:194px" width="7" height="4" viewBox="0 0 7 4"><path d="M0 3.5 H7 L3.5 0Z" fill="#a0a0a0"/></svg>
<svg class="r" style="left:1128px;top:475px" width="7" height="4" viewBox="0 0 7 4"><path d="M0 0 H7 L3.5 3.5Z" fill="#a0a0a0"/></svg>
<div class="r" style="left:658px;top:491px;width:1px;height:1px;background:#888"></div>
<div class="r" style="left:660px;top:491px;width:1px;height:1px;background:#888"></div>
<div class="r" style="left:662px;top:491px;width:1px;height:1px;background:#888"></div>
<div class="r" style="left:664px;top:491px;width:1px;height:1px;background:#888"></div>
<div class="r" style="left:666px;top:491px;width:1px;height:1px;background:#888"></div>
<div class="r" style="left:668px;top:491px;width:1px;height:1px;background:#888"></div>
<div class="r" style="left:670px;top:491px;width:1px;height:1px;background:#888"></div>
<div class="r" style="left:672px;top:491px;width:1px;height:1px;background:#888"></div>
<svg class="r" style="left:210px;top:508px" width="47" height="46" viewBox="0 0 47 46"><defs><linearGradient id="tb" x1="0" y1="0" x2="0" y2="1"><stop offset="0" stop-color="#a8ccf0"/><stop offset="1" stop-color="#5a9ae0"/></linearGradient></defs><rect x="2" y="42" width="40" height="3" fill="#e8e8e8"/><rect x="0.5" y="0.5" width="42" height="41.5" rx="2.5" fill="#fff" stroke="#4a94e8"/><path d="M0.5 8.5 V3 Q0.5 0.5 3 0.5 H40 Q42.5 0.5 42.5 3 V8.5Z" fill="url(#tb)" stroke="#4a94e8"/><path d="M16 9 V41.5" stroke="#b8d4f4"/><path d="M3 12.5 H14 M3 17.5 H14 M3 22.5 H14 M3 27.5 H14" stroke="#a4b0bc" stroke-width="1.6"/><rect x="19.5" y="10.5" width="21" height="18" fill="none" stroke="#c8d4e0"/><path d="M15 44 L20.57 42.65 L16.75 38.55Z" fill="#e8c098"/><path d="M15 44 L17 43.5 L15.6 42Z" fill="#333"/><path d="M16.75 38.55 L20.57 42.65 L37.41 26.98 L33.59 22.88Z" fill="#f0c810" stroke="#c89a10" stroke-width="0.6"/><path d="M33.59 22.88 L37.41 26.98 L41.8 22.9 L37.98 18.8Z" fill="#d8d8d8" stroke="#a0a0a0" stroke-width="0.6"/><path d="M37.98 18.8 L41.8 22.9 L45.3 19.6 Q46 17.5 44 15.8 L42.5 15Z" fill="#e03a3a"/></svg>
<div class="t" style="left:200px;top:513.69px;font-size:11px;line-height:15px;color:#222;letter-spacing:-0.2px;width:116px;text-align:right;">Origen:</div>
<div class="t" style="left:200px;top:537.69px;font-size:11px;line-height:15px;color:#222;letter-spacing:-0.2px;width:116px;text-align:right;">Destino:</div>
<div class="r" style="left:319px;top:512px;width:289px;height:19px;background:#f0f0f0;border:1px solid #b8b8b8"></div>
<div class="t" style="left:322px;top:513.69px;font-size:11px;line-height:15px;color:#222;letter-spacing:-0.2px;">Celaya</div>
<div class="r" style="left:319px;top:536px;width:289px;height:19px;background:#f0f0f0;border:1px solid #b8b8b8"></div>
<div class="t" style="left:322px;top:537.69px;font-size:11px;line-height:15px;color:#222;letter-spacing:-0.2px;">San Miguel de Allende</div>
<div class="t" style="left:560px;top:513.69px;font-size:11px;line-height:15px;color:#222;letter-spacing:-0.2px;width:108px;text-align:right;">Tarifa Base:</div>
<div class="t" style="left:560px;top:537.69px;font-size:11px;line-height:15px;color:#222;letter-spacing:-0.2px;width:108px;text-align:right;">Distancia:</div>
<div class="r" style="left:671px;top:512px;width:115px;height:19px;background:#f0f0f0;border:1px solid #b8b8b8"></div>
<div class="t" style="left:674px;top:513.69px;font-size:11px;line-height:15px;color:#222;letter-spacing:-0.2px;">$150.00</div>
<div class="r" style="left:671px;top:536px;width:115px;height:19px;background:#f0f0f0;border:1px solid #b8b8b8"></div>
<div class="t" style="left:674px;top:537.69px;font-size:11px;line-height:15px;color:#222;letter-spacing:-0.2px;">135</div>
<div class="t" style="left:791px;top:513.69px;font-size:11px;line-height:15px;color:#222;letter-spacing:-0.2px;">por:</div>
<div class="t" style="left:791px;top:537.69px;font-size:11px;line-height:15px;color:#222;letter-spacing:-0.2px;">Kms</div>
<div class="r" style="left:816px;top:512px;width:161px;height:19px;background:#f0f0f0;border:1px solid #b8b8b8"></div>
<div class="t" style="left:819px;top:513.69px;font-size:11px;line-height:15px;color:#222;letter-spacing:-0.2px;">Por Persona</div>
<div class="r" style="left:191px;top:598px;width:949px;height:214px;border:1px solid #b4b4b4;background:#fff"></div>
<div class="r" style="left:359px;top:574px;width:158px;height:25px;background:#f0f0f0;border:1px solid #b4b4b4"></div>
<div class="r" style="left:516px;top:574px;width:189px;height:25px;background:#f0f0f0;border:1px solid #b4b4b4"></div>
<div class="t" style="left:368px;top:579.69px;font-size:11px;line-height:15px;color:#606060;letter-spacing:-0.15px;">Eventos de Viaje predefinidos</div>
<div class="t" style="left:527px;top:579.69px;font-size:11px;line-height:15px;color:#606060;letter-spacing:-0.18px;">Convenios de Importes en cobranza</div>
<div class="r" style="left:192px;top:572px;width:168px;height:27px;background:#fff;border-left:1px solid #b4b4b4;border-right:1px solid #b4b4b4"></div>
<div class="r" style="left:192px;top:572px;width:168px;height:2px;background:#1e9be6"></div>
<div class="t" style="left:202px;top:579.69px;font-size:11px;line-height:15px;color:#1a8ee0;letter-spacing:-0.13px;">Presupuesto de costos de viaje</div>
<div class="r" style="left:193px;top:600px;width:946px;height:210px;border-left:2px solid #b4b4b4;border-top:2px solid #b4b4b4;border-bottom:2px solid #bdbdbd;border-right:2px solid #c4c4c4;background:#fff"></div>
<div class="r" style="left:195px;top:602px;width:941px;height:17px;background:#f4f4f4"></div>
<div class="r" style="left:195px;top:619px;width:941px;height:1px;background:#b4b4b4"></div>
<div class="r" style="left:195px;top:620px;width:10px;height:40px;background:#f4f4f4"></div>
<div class="r" style="left:206px;top:620px;width:930px;height:19px;background:#dcf0fb"></div>
<div class="r" style="left:195px;top:639px;width:941px;height:1px;background:#b4b4b4"></div>
<div class="r" style="left:195px;top:659px;width:941px;height:1px;background:#b4b4b4"></div>
<div class="r" style="left:205px;top:602px;width:1px;height:58px;background:#b4b4b4"></div>
<div class="r" style="left:552px;top:602px;width:1px;height:58px;background:#b4b4b4"></div>
<div class="r" style="left:634px;top:602px;width:1px;height:58px;background:#b4b4b4"></div>
<div class="r" style="left:776px;top:602px;width:1px;height:58px;background:#b4b4b4"></div>
<div class="r" style="left:852px;top:602px;width:1px;height:58px;background:#b4b4b4"></div>
<div class="r" style="left:1023px;top:602px;width:1px;height:58px;background:#b4b4b4"></div>
<div class="t" style="left:208px;top:603.69px;font-size:11px;line-height:15px;color:#222;letter-spacing:-0.2px;">Descripción</div>
<div class="t" style="left:555px;top:603.69px;font-size:11px;line-height:15px;color:#222;letter-spacing:-0.2px;">Cantidad</div>
<div class="t" style="left:637px;top:603.69px;font-size:11px;line-height:15px;color:#222;letter-spacing:-0.2px;">Concepto de costo</div>
<div class="t" style="left:779px;top:603.69px;font-size:11px;line-height:15px;color:#222;letter-spacing:-0.2px;">Comprobar</div>
<div class="t" style="left:855px;top:603.69px;font-size:11px;line-height:15px;color:#222;letter-spacing:-0.2px;">Tipo de Gasto</div>
<div class="t" style="left:1026px;top:603.69px;font-size:11px;line-height:15px;color:#222;letter-spacing:-0.2px;">Importe</div>
<svg class="r" style="left:196px;top:607px" width="8" height="8" viewBox="0 0 8 8"><path d="M4 0 V8 M0 4 H8 M1.2 1.2 L6.8 6.8 M6.8 1.2 L1.2 6.8" stroke="#666" stroke-width="1"/></svg>
<svg class="r" style="left:199px;top:626px" width="5" height="7" viewBox="0 0 5 7"><path d="M0 0 L4.5 3.5 L0 7Z" fill="#555"/></svg>
<div class="t" style="left:208px;top:622.69px;font-size:11px;line-height:15px;color:#222;letter-spacing:-0.2px;">CASETA IZCALLI  KM 105</div>
<div class="t" style="left:553px;top:622.69px;font-size:11px;line-height:15px;color:#222;letter-spacing:-0.2px;width:78px;text-align:right;">1</div>
<div class="t" style="left:637px;top:622.69px;font-size:11px;line-height:15px;color:#222;letter-spacing:-0.2px;">Casetas de cuota</div>
<div class="t" style="left:855px;top:622.69px;font-size:11px;line-height:15px;color:#222;letter-spacing:-0.2px;">Peaje</div>
<div class="t" style="left:1024px;top:622.69px;font-size:11px;line-height:15px;color:#222;letter-spacing:-0.2px;width:110px;text-align:right;">$85.00</div>
<svg class="r" style="left:808px;top:623px" width="13" height="13" viewBox="0 0 13 13"><defs><linearGradient id="cbg" x1="0" y1="0" x2="1" y2="1"><stop offset="0" stop-color="#e6e6e6"/><stop offset="1" stop-color="#fafafa"/></linearGradient></defs><rect x="0.5" y="0.5" width="12" height="12" fill="url(#cbg)" stroke="#7a7a7a"/><path d="M2.5 6.5 L5 9.5 L10.5 3" stroke="#5a5a5a" stroke-width="2" fill="none"/></svg>
<div class="t" style="left:208px;top:642.69px;font-size:11px;line-height:15px;color:#222;letter-spacing:-0.2px;">ALIMENTACION</div>
<div class="t" style="left:553px;top:642.69px;font-size:11px;line-height:15px;color:#222;letter-spacing:-0.2px;width:78px;text-align:right;">1</div>
<div class="t" style="left:637px;top:642.69px;font-size:11px;line-height:15px;color:#222;letter-spacing:-0.2px;">Alimentos</div>
<div class="t" style="left:855px;top:642.69px;font-size:11px;line-height:15px;color:#222;letter-spacing:-0.2px;">Otros gastos</div>
<div class="t" style="left:1024px;top:642.69px;font-size:11px;line-height:15px;color:#222;letter-spacing:-0.2px;width:110px;text-align:right;">$200.00</div>
<svg class="r" style="left:808px;top:643px" width="13" height="13" viewBox="0 0 13 13"><defs><linearGradient id="cbg" x1="0" y1="0" x2="1" y2="1"><stop offset="0" stop-color="#e6e6e6"/><stop offset="1" stop-color="#fafafa"/></linearGradient></defs><rect x="0.5" y="0.5" width="12" height="12" fill="url(#cbg)" stroke="#7a7a7a"/><path d="M2.5 6.5 L5 9.5 L10.5 3" stroke="#5a5a5a" stroke-width="2" fill="none"/></svg>
<div class="r" style="left:195px;top:778px;width:941px;height:1px;background:#b8b8b8"></div>
<div class="r" style="left:195px;top:779px;width:941px;height:29px;background:#f4f4f4"></div>
<div class="r" style="left:1026px;top:781px;width:108px;height:25px;background:#fff;border:1px solid #c0c0c0"></div>
<div class="t" style="left:1026px;top:786.69px;font-size:11px;line-height:15px;color:#222;letter-spacing:-0.2px;width:102px;text-align:right;">$285.00</div>
</body></html>
